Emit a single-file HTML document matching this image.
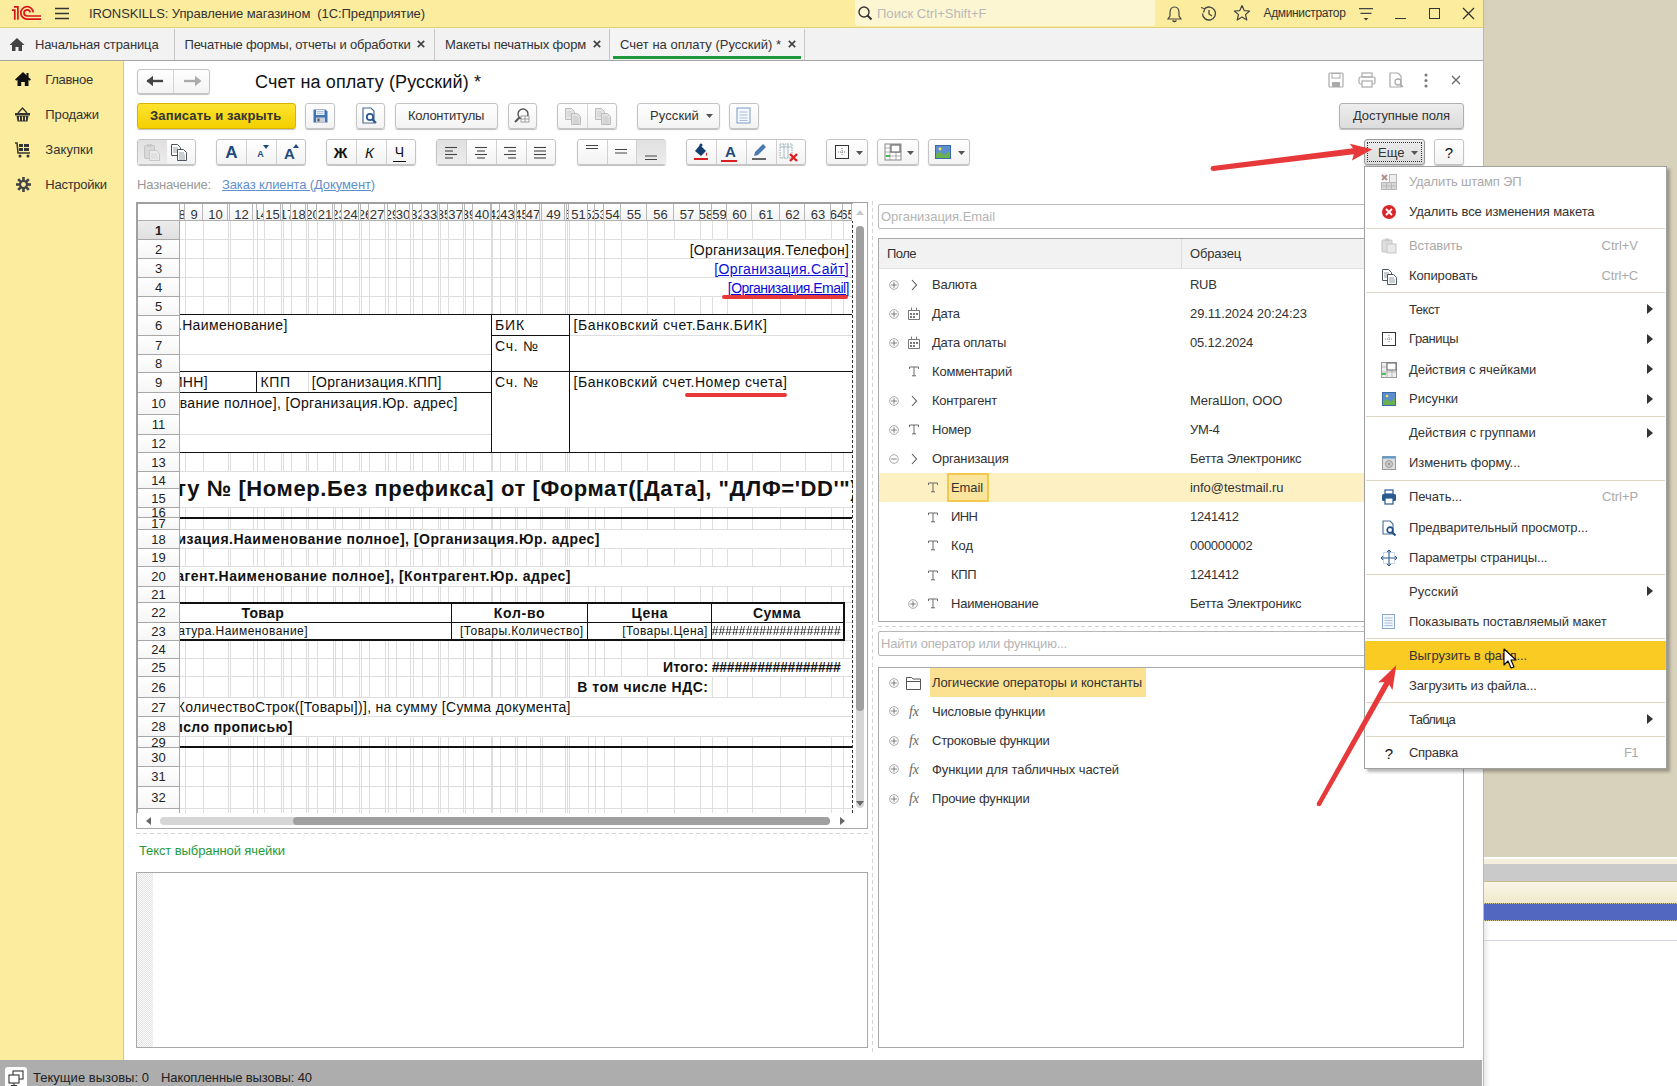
<!DOCTYPE html><html><head><meta charset="utf-8"><style>
html,body{margin:0;padding:0;}
body{width:1677px;height:1086px;position:relative;overflow:hidden;background:#fff;font-family:"Liberation Sans",sans-serif;}
.btn{position:absolute;box-sizing:border-box;border:1px solid #c4c4c4;border-radius:3px;background:linear-gradient(#fff,#f3f3f3);box-shadow:0 1px 1px rgba(0,0,0,0.25);}
.dv{position:absolute;top:0;bottom:0;width:1px;background:#d0d0d0;}
</style></head><body>
<div style="position:absolute;left:0px;top:0px;width:1483px;height:28px;background:#fbec9e;"></div>
<div style="position:absolute;left:0px;top:27px;width:1483px;height:1px;background:#e3cf78;"></div>
<div style="position:absolute;left:1483px;top:0px;width:194px;height:1086px;background:#d8d2bc;"></div>
<svg style="position:absolute;left:0;top:0;" width="48" height="26"><g fill="none" stroke="#d8141c" stroke-width="1.7"><path d="M12 10.1 H14.8 V19.8"/><path d="M14 6.8 H17.9 V19.8"/><path d="M33.2 12.4 A6.2 6.2 0 1 0 27.1 19.1 H41"/><path d="M30.2 12.4 A3.1 3.1 0 1 0 27.1 16 H41"/></g></svg>
<svg style="position:absolute;left:55px;top:7px;" width="14" height="13" viewBox="0 0 14 13"><g stroke="#333" stroke-width="1.3"><path d="M0 1.5H14M0 6.5H14M0 11.5H14"/></g></svg>
<div style="position:absolute;left:89px;top:5.50px;line-height:16px;font-size:13px;color:#333;font-weight:400;white-space:pre;font-family:'Liberation Sans',sans-serif;letter-spacing:-0.084px;">IRONSKILLS: Управление магазином  (1С:Предприятие)</div>
<div style="position:absolute;left:855px;top:0px;width:300px;height:26px;background:#fdf6d2;border-radius:0 0 3px 3px;"></div>
<svg style="position:absolute;left:858px;top:6px;" width="15" height="15" viewBox="0 0 15 15"><circle cx="6" cy="6" r="5" fill="none" stroke="#333" stroke-width="1.4"/><path d="M9.5 9.5 L13.5 13.5" stroke="#333" stroke-width="2"/></svg>
<div style="position:absolute;left:877px;top:5.50px;line-height:16px;font-size:13px;color:#b9b9b9;font-weight:400;white-space:pre;font-family:'Liberation Sans',sans-serif;letter-spacing:0.028px;">Поиск Ctrl+Shift+F</div>
<svg style="position:absolute;left:1166px;top:5px;" width="17" height="18" viewBox="0 0 17 18"><path d="M8.5 2 C5 2 4 5 4 8 V11 L2 14 H15 L13 11 V8 C13 5 12 2 8.5 2Z" fill="none" stroke="#444" stroke-width="1.2"/><path d="M6.5 15.5 Q8.5 17.5 10.5 15.5" fill="none" stroke="#444" stroke-width="1.2"/></svg>
<svg style="position:absolute;left:1199px;top:4px;" width="19" height="19" viewBox="0 0 19 19"><path d="M3.5 9.5 A6.5 6.5 0 1 0 5.5 4.8" fill="none" stroke="#444" stroke-width="1.3"/><path d="M2 3.5 L5.8 4.8 L4.5 8.5" fill="none" stroke="#444" stroke-width="1.2"/><path d="M10 6 V10 L13 12" fill="none" stroke="#444" stroke-width="1.3"/></svg>
<svg style="position:absolute;left:1233px;top:4px;" width="18" height="18" viewBox="0 0 18 18"><path d="M9 1.5 L11.2 6.6 L16.6 7 L12.5 10.6 L13.8 16 L9 13.1 L4.2 16 L5.5 10.6 L1.4 7 L6.8 6.6Z" fill="none" stroke="#444" stroke-width="1.2" stroke-linejoin="round"/></svg>
<div style="position:absolute;left:1263.5px;top:6.00px;line-height:15px;font-size:12px;color:#333;font-weight:400;white-space:pre;font-family:'Liberation Sans',sans-serif;letter-spacing:-0.352px;">Администратор</div>
<svg style="position:absolute;left:1358px;top:5px;" width="16" height="17" viewBox="0 0 16 17"><path d="M1 3.6H15M2.5 8.4H13.5" stroke="#444" stroke-width="1.1"/><path d="M5.5 13 L8 15.5 L10.5 13Z" fill="#444"/></svg>
<div style="position:absolute;left:1395px;top:18px;width:11px;height:1.3px;background:#333;"></div>
<div style="position:absolute;left:1429px;top:8px;width:11px;height:11px;border:1.3px solid #333;box-sizing:border-box;"></div>
<svg style="position:absolute;left:1462px;top:7px;" width="13" height="13" viewBox="0 0 13 13"><path d="M1 1L12 12M12 1L1 12" stroke="#333" stroke-width="1.3"/></svg>
<div style="position:absolute;left:0px;top:28px;width:1483px;height:32px;background:#f2f2f2;"></div>
<div style="position:absolute;left:0px;top:60px;width:1483px;height:1px;background:#a5a5a5;"></div>
<svg style="position:absolute;left:9px;top:37px;" width="16" height="15" viewBox="0 0 16 15"><path d="M8 1 L15.5 8 H13 V14 H9.5 V10 H6.5 V14 H3 V8 H0.5Z" fill="#444"/></svg>
<div style="position:absolute;left:35px;top:36.80px;line-height:16px;font-size:13px;color:#333;font-weight:400;white-space:pre;font-family:'Liberation Sans',sans-serif;letter-spacing:-0.128px;">Начальная страница</div>
<div style="position:absolute;left:174px;top:29px;width:1px;height:31px;background:#c8c8c8;"></div>
<div style="position:absolute;left:184.6px;top:36.80px;line-height:16px;font-size:13px;color:#333;font-weight:400;white-space:pre;font-family:'Liberation Sans',sans-serif;letter-spacing:-0.192px;">Печатные формы, отчеты и обработки</div>
<svg style="position:absolute;left:417px;top:40px;" width="8" height="8" viewBox="0 0 8 8"><path d="M0.8 0.8L7.2 7.2M7.2 0.8L0.8 7.2" stroke="#444" stroke-width="1.7"/></svg>
<div style="position:absolute;left:434px;top:29px;width:1px;height:31px;background:#c8c8c8;"></div>
<div style="position:absolute;left:445px;top:36.80px;line-height:16px;font-size:13px;color:#333;font-weight:400;white-space:pre;font-family:'Liberation Sans',sans-serif;letter-spacing:-0.149px;">Макеты печатных форм</div>
<svg style="position:absolute;left:593px;top:40px;" width="8" height="8" viewBox="0 0 8 8"><path d="M0.8 0.8L7.2 7.2M7.2 0.8L0.8 7.2" stroke="#444" stroke-width="1.7"/></svg>
<div style="position:absolute;left:609px;top:29px;width:1px;height:31px;background:#c8c8c8;"></div>
<div style="position:absolute;left:610px;top:29px;width:194px;height:30px;background:#f4f4f4;"></div>
<div style="position:absolute;left:620px;top:36.80px;line-height:16px;font-size:13px;color:#333;font-weight:400;white-space:pre;font-family:'Liberation Sans',sans-serif;letter-spacing:0.001px;">Счет на оплату (Русский) *</div>
<svg style="position:absolute;left:788px;top:40px;" width="8" height="8" viewBox="0 0 8 8"><path d="M0.8 0.8L7.2 7.2M7.2 0.8L0.8 7.2" stroke="#444" stroke-width="1.7"/></svg>
<div style="position:absolute;left:613px;top:56px;width:188px;height:2.5px;background:#1e9a3c;"></div>
<div style="position:absolute;left:804px;top:29px;width:1px;height:31px;background:#c8c8c8;"></div>
<div style="position:absolute;left:0px;top:61px;width:123px;height:999px;background:#fbec9e;"></div>
<div style="position:absolute;left:123px;top:61px;width:1px;height:999px;background:#d9c67a;"></div>
<svg style="position:absolute;left:14px;top:71px;" width="18" height="16" viewBox="0 0 18 16"><path d="M9 1 L17 8.5 L15.6 9.8 L14.5 8.8 V15 H10.8 V11 H7.2 V15 H3.5 V8.8 L2.4 9.8 L1 8.5Z" fill="#111"/><rect x="12.5" y="2" width="2" height="4" fill="#111"/></svg>
<div style="position:absolute;left:45.3px;top:71.50px;line-height:16px;font-size:13px;color:#333;font-weight:400;white-space:pre;font-family:'Liberation Sans',sans-serif;letter-spacing:-0.310px;">Главное</div>
<svg style="position:absolute;left:14px;top:107px;" width="17" height="15" viewBox="0 0 17 15"><path d="M4 6 L8.5 1 L13 6" fill="none" stroke="#333" stroke-width="1.3"/><rect x="1" y="6" width="15" height="2.5" fill="#333"/><path d="M2.5 9 H14.5 L13.5 14.5 H3.5Z" fill="#333"/><path d="M5.5 9.5V13.5M8.5 9.5V13.5M11.5 9.5V13.5" stroke="#fbec9e" stroke-width="1"/></svg>
<div style="position:absolute;left:45.3px;top:106.50px;line-height:16px;font-size:13px;color:#333;font-weight:400;white-space:pre;font-family:'Liberation Sans',sans-serif;letter-spacing:-0.114px;">Продажи</div>
<svg style="position:absolute;left:14px;top:142px;" width="18" height="16" viewBox="0 0 18 16"><path d="M1 1 H3 L4 11 H16" fill="none" stroke="#333" stroke-width="1.5"/><rect x="5" y="2" width="4" height="3" fill="#333"/><rect x="10" y="2" width="5" height="3" fill="#333"/><rect x="5" y="6" width="4" height="3" fill="#333"/><rect x="10" y="6" width="5" height="3" fill="#333"/><circle cx="6" cy="14" r="1.5" fill="#333"/><circle cx="14" cy="14" r="1.5" fill="#333"/></svg>
<div style="position:absolute;left:45.3px;top:141.50px;line-height:16px;font-size:13px;color:#333;font-weight:400;white-space:pre;font-family:'Liberation Sans',sans-serif;letter-spacing:0.056px;">Закупки</div>
<svg style="position:absolute;left:16px;top:177px;" width="15" height="15" viewBox="0 0 15 15"><g fill="#444"><circle cx="7.5" cy="7.5" r="4.6"/><rect x="6.2" y="0" width="2.6" height="15"/><rect x="0" y="6.2" width="15" height="2.6"/><rect x="6.2" y="0" width="2.6" height="15" transform="rotate(45 7.5 7.5)"/><rect x="6.2" y="0" width="2.6" height="15" transform="rotate(-45 7.5 7.5)"/></g><circle cx="7.5" cy="7.5" r="2.4" fill="#fbec9e"/></svg>
<div style="position:absolute;left:45.3px;top:176.50px;line-height:16px;font-size:13px;color:#333;font-weight:400;white-space:pre;font-family:'Liberation Sans',sans-serif;letter-spacing:-0.250px;">Настройки</div>
<div class="btn" style="left:137px;top:69px;width:73px;height:25px;"></div>
<div style="position:absolute;left:173px;top:70px;width:1px;height:23px;background:#d4d4d4;"></div>
<svg style="position:absolute;left:146px;top:75px;" width="20" height="12" viewBox="0 0 20 12"><path d="M1 6 H17" stroke="#444" stroke-width="2.4"/><path d="M0.5 6 L7 0.8 L7 11.2Z" fill="#444"/></svg>
<svg style="position:absolute;left:182px;top:75px;" width="20" height="12" viewBox="0 0 20 12"><path d="M2 6 H18" stroke="#aaa" stroke-width="2.4"/><path d="M19.5 6 L13 0.8 L13 11.2Z" fill="#aaa"/></svg>
<div style="position:absolute;left:255px;top:70.50px;line-height:22px;font-size:18px;color:#111;font-weight:400;white-space:pre;font-family:'Liberation Sans',sans-serif;letter-spacing:0.120px;">Счет на оплату (Русский) *</div>
<svg style="position:absolute;left:1328px;top:72px;" width="16" height="16" viewBox="0 0 16 16"><rect x="1" y="1" width="14" height="14" rx="1" fill="none" stroke="#aaa" stroke-width="1.2"/><rect x="4" y="1.5" width="8" height="4.5" fill="none" stroke="#aaa"/><rect x="4" y="10" width="8" height="5" fill="#aaa"/></svg>
<svg style="position:absolute;left:1358px;top:72px;" width="18" height="16" viewBox="0 0 18 16"><rect x="4" y="1" width="10" height="4" fill="none" stroke="#aaa" stroke-width="1.2"/><rect x="1" y="5" width="16" height="7" rx="1.5" fill="none" stroke="#aaa" stroke-width="1.2"/><rect x="4" y="9" width="10" height="6" fill="#fff" stroke="#aaa" stroke-width="1.2"/></svg>
<svg style="position:absolute;left:1389px;top:72px;" width="17" height="17" viewBox="0 0 17 17"><path d="M1 1 H9 L12 4 V15 H1Z" fill="none" stroke="#aaa" stroke-width="1.2"/><circle cx="9" cy="10" r="3" fill="none" stroke="#aaa" stroke-width="1.3"/><path d="M11 12 L14 15" stroke="#aaa" stroke-width="1.6"/></svg>
<svg style="position:absolute;left:1423px;top:73px;" width="6" height="15" viewBox="0 0 6 15"><circle cx="3" cy="2" r="1.5" fill="#777"/><circle cx="3" cy="7.5" r="1.5" fill="#777"/><circle cx="3" cy="13" r="1.5" fill="#777"/></svg>
<svg style="position:absolute;left:1451px;top:75px;" width="10" height="10" viewBox="0 0 10 10"><path d="M1 1L9 9M9 1L1 9" stroke="#666" stroke-width="1.3"/></svg>
<div class="btn" style="left:137px;top:103px;width:159px;height:26px;background:linear-gradient(#fde431,#f4cf00);border-color:#d7b400;"></div>
<div style="position:absolute;left:150px;top:108.00px;line-height:16px;font-size:13px;color:#333;font-weight:700;white-space:pre;font-family:'Liberation Sans',sans-serif;letter-spacing:0.148px;">Записать и закрыть</div>
<div class="btn" style="left:305px;top:103px;width:30px;height:26px;"></div>
<svg style="position:absolute;left:313px;top:109px;" width="15" height="14" viewBox="0 0 15 14"><path d="M0.5 0.5H12.5L14.5 2.5V13.5H0.5Z" fill="#3f73b5"/><rect x="3" y="1" width="8.5" height="5" fill="#e9f0f8"/><path d="M4 2.5H10.5M4 4.3H10.5" stroke="#9fb8d8" stroke-width="0.8"/><rect x="3" y="8.5" width="9" height="5" fill="#c9cfd6"/><rect x="4.5" y="9.5" width="2" height="3" fill="#555"/></svg>
<div class="btn" style="left:356px;top:103px;width:29px;height:26px;"></div>
<svg style="position:absolute;left:361px;top:107px;" width="19" height="18" viewBox="0 0 19 18"><path d="M2 1 H10 L13 4 V16 H2Z" fill="#fff" stroke="#4a6c94" stroke-width="1.2"/><circle cx="9" cy="10" r="3.2" fill="none" stroke="#2a5a90" stroke-width="1.8"/><path d="M11.5 12.5 L15 16" stroke="#2a5a90" stroke-width="2.2"/></svg>
<div class="btn" style="left:395px;top:103px;width:103px;height:26px;"></div>
<div style="position:absolute;left:408px;top:108.00px;line-height:16px;font-size:13px;color:#333;font-weight:400;white-space:pre;font-family:'Liberation Sans',sans-serif;letter-spacing:-0.284px;">Колонтитулы</div>
<div class="btn" style="left:508px;top:103px;width:29px;height:26px;"></div>
<svg style="position:absolute;left:513px;top:107px;" width="19" height="18" viewBox="0 0 19 18"><circle cx="10" cy="7" r="5" fill="none" stroke="#555" stroke-width="1.4"/><path d="M6.5 10.5 L2 15" stroke="#555" stroke-width="2"/><rect x="8" y="9" width="8" height="6" fill="#fff" stroke="#888" stroke-width="0.8"/><path d="M8 12H16M12 9V15" stroke="#888" stroke-width="0.8"/></svg>
<div class="btn" style="left:557px;top:103px;width:60px;height:26px;"></div>
<div style="position:absolute;left:587px;top:104px;width:1px;height:24px;background:#d4d4d4;"></div>
<svg style="position:absolute;left:564px;top:107px;" width="19" height="19" viewBox="0 0 19 19"><path d="M1.5 1.5H7.5L10.5 4.5V12.5H1.5Z" fill="#e6e6e6" stroke="#bdbdbd" stroke-width="1"/><path d="M3 5H8M3 7H9M3 9H9" stroke="#c8c8c8" stroke-width="0.8"/><path d="M7.5 6.5H13.5L16.5 9.5V17.5H7.5Z" fill="#e0e0e0" stroke="#bdbdbd" stroke-width="1"/><path d="M9 10H14M9 12H15M9 14H15M9 16H15" stroke="#c4c4c4" stroke-width="0.8"/></svg>
<svg style="position:absolute;left:594px;top:107px;" width="19" height="19" viewBox="0 0 19 19"><path d="M1.5 1.5H7.5L10.5 4.5V12.5H1.5Z" fill="#e6e6e6" stroke="#bdbdbd" stroke-width="1"/><path d="M3 5H8M3 7H9M3 9H9" stroke="#c8c8c8" stroke-width="0.8"/><path d="M7.5 6.5H13.5L16.5 9.5V17.5H7.5Z" fill="#e0e0e0" stroke="#bdbdbd" stroke-width="1"/><path d="M9 10H14M9 12H15M9 14H15M9 16H15" stroke="#c4c4c4" stroke-width="0.8"/></svg>
<div class="btn" style="left:637px;top:103px;width:83px;height:26px;"></div>
<div style="position:absolute;left:650px;top:108.00px;line-height:16px;font-size:13px;color:#333;font-weight:400;white-space:pre;font-family:'Liberation Sans',sans-serif;letter-spacing:0.107px;">Русский</div>
<svg style="position:absolute;left:706px;top:114px;" width="7" height="4" viewBox="0 0 7 4"><path d="M0 0H7L3.5 4Z" fill="#555"/></svg>
<div class="btn" style="left:729px;top:103px;width:30px;height:26px;"></div>
<svg style="position:absolute;left:736px;top:107px;" width="15" height="17" viewBox="0 0 15 17"><rect x="1" y="1" width="13" height="15" fill="#f4f7fb" stroke="#7d9cc6"/><path d="M3.5 5H11.5M3.5 8H11.5M3.5 11H11.5M3.5 13.5H11.5" stroke="#a9bfdc" stroke-width="1"/></svg>
<div class="btn" style="left:1339px;top:103px;width:125px;height:26px;background:linear-gradient(#ededed,#dcdcdc);border-color:#b0b0b0;"></div>
<div style="position:absolute;left:1353px;top:108.00px;line-height:16px;font-size:13px;color:#333;font-weight:400;white-space:pre;font-family:'Liberation Sans',sans-serif;letter-spacing:-0.093px;">Доступные поля</div>
<div class="btn" style="left:137px;top:139px;width:59px;height:26px;"></div>
<div style="position:absolute;left:166px;top:140px;width:1px;height:24px;background:#d0d0d0;"></div>
<div style="position:absolute;left:138px;top:140px;width:29px;height:24px;background:linear-gradient(#e0e0e0,#ececec);"></div>
<svg style="position:absolute;left:143px;top:143px;" width="18" height="19" viewBox="0 0 18 19"><rect x="1.5" y="2.5" width="10" height="13" rx="1" fill="#d9d9d9" stroke="#c4c4c4"/><rect x="4" y="1" width="5" height="3" rx="1" fill="#c8c8c8"/><path d="M6.5 7.5H13.5L16.5 10.5V17.5H6.5Z" fill="#ebebeb" stroke="#c8c8c8"/><path d="M8 11H14M8 13H15M8 15H15" stroke="#d0d0d0" stroke-width="0.8"/></svg>
<svg style="position:absolute;left:170px;top:143px;" width="19" height="19" viewBox="0 0 19 19"><path d="M1.5 1.5H7.5L10.5 4.5V12.5H1.5Z" fill="#fff" stroke="#4a5560" stroke-width="1"/><path d="M3 5H8M3 7H9M3 9H9" stroke="#7a8590" stroke-width="0.8"/><path d="M7.5 6.5H13.5L16.5 9.5V17.5H7.5Z" fill="#fff" stroke="#4a5560" stroke-width="1"/><path d="M9 10H14M9 12H15M9 14H15M9 16H15" stroke="#7a8590" stroke-width="0.8"/></svg>
<div class="btn" style="left:216px;top:139px;width:90px;height:26px;"></div>
<div style="position:absolute;left:246px;top:140px;width:1px;height:24px;background:#d0d0d0;"></div>
<div style="position:absolute;left:276px;top:140px;width:1px;height:24px;background:#d0d0d0;"></div>
<div style="position:absolute;left:-368.5px;width:1200px;text-align:center;top:142.00px;line-height:21px;font-size:17px;color:#1d4a7a;font-weight:700;white-space:pre;font-family:'Liberation Sans',sans-serif;">A</div>
<div style="position:absolute;left:-339.5px;width:1200px;text-align:center;top:148.50px;line-height:11px;font-size:9px;color:#1d4a7a;font-weight:700;white-space:pre;font-family:'Liberation Sans',sans-serif;">A</div>
<svg style="position:absolute;left:263px;top:145px;" width="6" height="4" viewBox="0 0 6 4"><path d="M0 0H6L3 4Z" fill="#1d4a7a"/></svg>
<div style="position:absolute;left:-310.5px;width:1200px;text-align:center;top:143.50px;line-height:19px;font-size:15px;color:#1d4a7a;font-weight:700;white-space:pre;font-family:'Liberation Sans',sans-serif;">A</div>
<svg style="position:absolute;left:293px;top:144px;" width="6" height="4" viewBox="0 0 6 4"><path d="M0 4H6L3 0Z" fill="#1d4a7a"/></svg>
<div class="btn" style="left:326px;top:139px;width:90px;height:26px;"></div>
<div style="position:absolute;left:356px;top:140px;width:1px;height:24px;background:#d0d0d0;"></div>
<div style="position:absolute;left:386px;top:140px;width:1px;height:24px;background:#d0d0d0;"></div>
<div style="position:absolute;left:-259.5px;width:1200px;text-align:center;top:143.00px;line-height:19px;font-size:15px;color:#111;font-weight:700;white-space:pre;font-family:'Liberation Sans',sans-serif;">Ж</div>
<div style="position:absolute;left:-230.5px;width:1200px;text-align:center;top:143.00px;line-height:19px;font-size:15px;color:#111;font-weight:400;white-space:pre;font-family:'Liberation Sans',sans-serif;font-style:italic;">К</div>
<div style="position:absolute;left:-200.5px;width:1200px;text-align:center;top:142.50px;line-height:18px;font-size:14px;color:#111;font-weight:400;white-space:pre;font-family:'Liberation Sans',sans-serif;">Ч</div>
<div style="position:absolute;left:393px;top:161px;width:13px;height:1px;background:#111;"></div>
<div class="btn" style="left:436px;top:139px;width:120px;height:26px;"></div>
<div style="position:absolute;left:466px;top:140px;width:1px;height:24px;background:#d0d0d0;"></div>
<div style="position:absolute;left:496px;top:140px;width:1px;height:24px;background:#d0d0d0;"></div>
<div style="position:absolute;left:526px;top:140px;width:1px;height:24px;background:#d0d0d0;"></div>
<div style="position:absolute;left:437px;top:140px;width:29px;height:24px;background:linear-gradient(#e0e0e0,#ececec);"></div>
<svg style="position:absolute;left:445px;top:146px;" width="12" height="14" viewBox="0 0 12 14"><path d="M0 1.5H12" stroke="#444" stroke-width="1.1"/><path d="M0 5.0H8" stroke="#444" stroke-width="1.1"/><path d="M0 8.5H12" stroke="#444" stroke-width="1.1"/><path d="M0 12.0H8" stroke="#444" stroke-width="1.1"/></svg>
<svg style="position:absolute;left:475px;top:146px;" width="12" height="14" viewBox="0 0 12 14"><path d="M0 1.5H12" stroke="#444" stroke-width="1.1"/><path d="M2 5.0H10" stroke="#444" stroke-width="1.1"/><path d="M0 8.5H12" stroke="#444" stroke-width="1.1"/><path d="M2 12.0H10" stroke="#444" stroke-width="1.1"/></svg>
<svg style="position:absolute;left:504px;top:146px;" width="12" height="14" viewBox="0 0 12 14"><path d="M0 1.5H12" stroke="#444" stroke-width="1.1"/><path d="M4 5.0H12" stroke="#444" stroke-width="1.1"/><path d="M0 8.5H12" stroke="#444" stroke-width="1.1"/><path d="M4 12.0H12" stroke="#444" stroke-width="1.1"/></svg>
<svg style="position:absolute;left:534px;top:146px;" width="12" height="14" viewBox="0 0 12 14"><path d="M0 1.5H12" stroke="#444" stroke-width="1.1"/><path d="M0 5.0H12" stroke="#444" stroke-width="1.1"/><path d="M0 8.5H12" stroke="#444" stroke-width="1.1"/><path d="M0 12.0H12" stroke="#444" stroke-width="1.1"/></svg>
<div class="btn" style="left:577px;top:139px;width:89px;height:26px;"></div>
<div style="position:absolute;left:607px;top:140px;width:1px;height:24px;background:#d0d0d0;"></div>
<div style="position:absolute;left:636px;top:140px;width:1px;height:24px;background:#d0d0d0;"></div>
<div style="position:absolute;left:637px;top:140px;width:29px;height:24px;background:linear-gradient(#e0e0e0,#ececec);"></div>
<svg style="position:absolute;left:585px;top:144px;" width="14" height="14" viewBox="0 0 14 14"><path d="M1 1.5H13M1 4.5H13" stroke="#444" stroke-width="1.1"/></svg>
<svg style="position:absolute;left:614px;top:147px;" width="14" height="10" viewBox="0 0 14 10"><path d="M1 2.5H13M1 6H13" stroke="#444" stroke-width="1.1"/></svg>
<svg style="position:absolute;left:644px;top:151px;" width="14" height="10" viewBox="0 0 14 10"><path d="M1 5H13M1 8.5H13" stroke="#444" stroke-width="1.1"/></svg>
<div class="btn" style="left:686px;top:139px;width:120px;height:26px;"></div>
<div style="position:absolute;left:716px;top:140px;width:1px;height:24px;background:#d0d0d0;"></div>
<div style="position:absolute;left:746px;top:140px;width:1px;height:24px;background:#d0d0d0;"></div>
<div style="position:absolute;left:776px;top:140px;width:1px;height:24px;background:#d0d0d0;"></div>
<svg style="position:absolute;left:692px;top:143px;" width="18" height="18" viewBox="0 0 18 18"><path d="M8 2 L14 8 L9 13 L3 8Z" fill="#133e6e"/><circle cx="9" cy="2" r="1.5" fill="#133e6e"/><path d="M14 9 Q16 12 14 13" fill="#c00"/><rect x="2" y="15" width="14" height="2" fill="#d81e1e"/></svg>
<div style="position:absolute;left:130.5px;width:1200px;text-align:center;top:142.00px;line-height:19px;font-size:15px;color:#1d4a7a;font-weight:700;white-space:pre;font-family:'Liberation Sans',sans-serif;">A</div>
<div style="position:absolute;left:721px;top:160px;width:16px;height:2px;background:#d81e1e;"></div>
<svg style="position:absolute;left:750px;top:143px;" width="18" height="18" viewBox="0 0 18 18"><path d="M13 1 L16 4 L8 12 L4 13 L5 9Z" fill="#4a7ab0"/><rect x="2" y="15" width="14" height="2" fill="#666"/></svg>
<svg style="position:absolute;left:779px;top:143px;" width="20" height="20" viewBox="0 0 20 20"><rect x="1" y="1" width="12" height="14" fill="none" stroke="#8aa" stroke-width="1" stroke-dasharray="1.5,1"/><path d="M1 4H13M5 1V15M9 1V15" stroke="#9ab" stroke-width="0.8"/><path d="M11 11L18 18M18 11L11 18" stroke="#e02020" stroke-width="2.4"/></svg>
<div class="btn" style="left:826px;top:139px;width:42px;height:26px;"></div>
<svg style="position:absolute;left:835px;top:145px;" width="14" height="14" viewBox="0 0 14 14"><rect x="0.5" y="0.5" width="13" height="13" fill="#fff" stroke="#333"/><path d="M7 3V11M3 7H11" stroke="#777" stroke-width="1" stroke-dasharray="1,1"/></svg>
<svg style="position:absolute;left:856px;top:151px;" width="7" height="4" viewBox="0 0 7 4"><path d="M0 0H7L3.5 4Z" fill="#555"/></svg>
<div class="btn" style="left:877px;top:139px;width:42px;height:26px;"></div>
<svg style="position:absolute;left:884px;top:143px;" width="18" height="18" viewBox="0 0 18 18"><rect x="1" y="1" width="16" height="16" fill="#fff" stroke="#888"/><path d="M1 5H17M1 9H17M1 13H17M6 1V17M12 1V17" stroke="#999" stroke-width="0.8"/><rect x="7" y="2" width="9" height="7" fill="#fff" stroke="#555"/><path d="M2 13H6" stroke="#2a2" stroke-width="1.5"/></svg>
<svg style="position:absolute;left:907px;top:151px;" width="7" height="4" viewBox="0 0 7 4"><path d="M0 0H7L3.5 4Z" fill="#555"/></svg>
<div class="btn" style="left:928px;top:139px;width:42px;height:26px;"></div>
<svg style="position:absolute;left:935px;top:145px;" width="16" height="14" viewBox="0 0 16 14"><rect x="0.5" y="0.5" width="15" height="13" fill="#5d8fcf" stroke="#3b6aa8"/><path d="M1 13 L1 9 L5 7 L9 10 L15 6 V13Z" fill="#6ab04c"/><circle cx="5" cy="4" r="1.4" fill="#ffe14a"/></svg>
<svg style="position:absolute;left:958px;top:151px;" width="7" height="4" viewBox="0 0 7 4"><path d="M0 0H7L3.5 4Z" fill="#555"/></svg>
<div class="btn" style="left:1364px;top:139px;width:61px;height:26px;background:linear-gradient(#ececec,#dcdcdc);border-color:#9a9a9a;"></div>
<div style="position:absolute;left:1367px;top:142px;width:55px;height:20px;border:1px dotted #333;box-sizing:border-box;"></div>
<div style="position:absolute;left:1378px;top:144.50px;line-height:16px;font-size:13px;color:#333;font-weight:400;white-space:pre;font-family:'Liberation Sans',sans-serif;">Еще</div>
<svg style="position:absolute;left:1411px;top:151px;" width="7" height="4" viewBox="0 0 7 4"><path d="M0 0H7L3.5 4Z" fill="#555"/></svg>
<div class="btn" style="left:1434px;top:139px;width:30px;height:26px;"></div>
<div style="position:absolute;left:849px;width:1200px;text-align:center;top:143.00px;line-height:19px;font-size:15px;color:#111;font-weight:400;white-space:pre;font-family:'Liberation Sans',sans-serif;">?</div>
<div style="position:absolute;left:137px;top:176.50px;line-height:16px;font-size:13px;color:#999;font-weight:400;white-space:pre;font-family:'Liberation Sans',sans-serif;letter-spacing:-0.168px;">Назначение:</div>
<div style="position:absolute;left:222px;top:176.50px;line-height:16px;font-size:13px;color:#5f8fcb;font-weight:400;white-space:pre;font-family:'Liberation Sans',sans-serif;letter-spacing:-0.116px;text-decoration:underline;">Заказ клиента (Документ)</div>
<div style="position:absolute;left:136px;top:202px;width:732px;height:627px;border:1px solid #a8a8a8;border-top:2px solid #a0a0a0;border-left:2px solid #a0a0a0;box-sizing:border-box;background:#fff;"></div>
<div style="position:absolute;left:180px;top:221px;width:673px;height:592px;overflow:hidden;">
<div style="position:absolute;left:5px;top:-1px;width:1px;height:593px;background:#dedede;"></div>
<div style="position:absolute;left:23px;top:-1px;width:1px;height:593px;background:#dedede;"></div>
<div style="position:absolute;left:48px;top:-1px;width:1px;height:593px;background:#dedede;"></div>
<div style="position:absolute;left:50px;top:-1px;width:1px;height:593px;background:#dedede;"></div>
<div style="position:absolute;left:73px;top:-1px;width:1px;height:593px;background:#dedede;"></div>
<div style="position:absolute;left:77px;top:-1px;width:1px;height:593px;background:#dedede;"></div>
<div style="position:absolute;left:84px;top:-1px;width:1px;height:593px;background:#dedede;"></div>
<div style="position:absolute;left:101px;top:-1px;width:1px;height:593px;background:#dedede;"></div>
<div style="position:absolute;left:103px;top:-1px;width:1px;height:593px;background:#dedede;"></div>
<div style="position:absolute;left:111px;top:-1px;width:1px;height:593px;background:#dedede;"></div>
<div style="position:absolute;left:126px;top:-1px;width:1px;height:593px;background:#dedede;"></div>
<div style="position:absolute;left:128px;top:-1px;width:1px;height:593px;background:#dedede;"></div>
<div style="position:absolute;left:137px;top:-1px;width:1px;height:593px;background:#dedede;"></div>
<div style="position:absolute;left:153px;top:-1px;width:1px;height:593px;background:#dedede;"></div>
<div style="position:absolute;left:155px;top:-1px;width:1px;height:593px;background:#dedede;"></div>
<div style="position:absolute;left:162px;top:-1px;width:1px;height:593px;background:#dedede;"></div>
<div style="position:absolute;left:179px;top:-1px;width:1px;height:593px;background:#dedede;"></div>
<div style="position:absolute;left:181px;top:-1px;width:1px;height:593px;background:#dedede;"></div>
<div style="position:absolute;left:189px;top:-1px;width:1px;height:593px;background:#dedede;"></div>
<div style="position:absolute;left:205px;top:-1px;width:1px;height:593px;background:#dedede;"></div>
<div style="position:absolute;left:208px;top:-1px;width:1px;height:593px;background:#dedede;"></div>
<div style="position:absolute;left:216px;top:-1px;width:1px;height:593px;background:#dedede;"></div>
<div style="position:absolute;left:230px;top:-1px;width:1px;height:593px;background:#dedede;"></div>
<div style="position:absolute;left:233px;top:-1px;width:1px;height:593px;background:#dedede;"></div>
<div style="position:absolute;left:242px;top:-1px;width:1px;height:593px;background:#dedede;"></div>
<div style="position:absolute;left:258px;top:-1px;width:1px;height:593px;background:#dedede;"></div>
<div style="position:absolute;left:260px;top:-1px;width:1px;height:593px;background:#dedede;"></div>
<div style="position:absolute;left:268px;top:-1px;width:1px;height:593px;background:#dedede;"></div>
<div style="position:absolute;left:283px;top:-1px;width:1px;height:593px;background:#dedede;"></div>
<div style="position:absolute;left:285px;top:-1px;width:1px;height:593px;background:#dedede;"></div>
<div style="position:absolute;left:293px;top:-1px;width:1px;height:593px;background:#dedede;"></div>
<div style="position:absolute;left:311px;top:-1px;width:1px;height:593px;background:#dedede;"></div>
<div style="position:absolute;left:312px;top:-1px;width:1px;height:593px;background:#dedede;"></div>
<div style="position:absolute;left:320px;top:-1px;width:1px;height:593px;background:#dedede;"></div>
<div style="position:absolute;left:335px;top:-1px;width:1px;height:593px;background:#dedede;"></div>
<div style="position:absolute;left:337px;top:-1px;width:1px;height:593px;background:#dedede;"></div>
<div style="position:absolute;left:346px;top:-1px;width:1px;height:593px;background:#dedede;"></div>
<div style="position:absolute;left:360px;top:-1px;width:1px;height:593px;background:#dedede;"></div>
<div style="position:absolute;left:362px;top:-1px;width:1px;height:593px;background:#dedede;"></div>
<div style="position:absolute;left:385px;top:-1px;width:1px;height:593px;background:#dedede;"></div>
<div style="position:absolute;left:387px;top:-1px;width:1px;height:593px;background:#dedede;"></div>
<div style="position:absolute;left:389px;top:-1px;width:1px;height:593px;background:#dedede;"></div>
<div style="position:absolute;left:408px;top:-1px;width:1px;height:593px;background:#dedede;"></div>
<div style="position:absolute;left:415px;top:-1px;width:1px;height:593px;background:#dedede;"></div>
<div style="position:absolute;left:424px;top:-1px;width:1px;height:593px;background:#dedede;"></div>
<div style="position:absolute;left:441px;top:-1px;width:1px;height:593px;background:#dedede;"></div>
<div style="position:absolute;left:467px;top:-1px;width:1px;height:593px;background:#dedede;"></div>
<div style="position:absolute;left:494px;top:-1px;width:1px;height:593px;background:#dedede;"></div>
<div style="position:absolute;left:520px;top:-1px;width:1px;height:593px;background:#dedede;"></div>
<div style="position:absolute;left:532px;top:-1px;width:1px;height:593px;background:#dedede;"></div>
<div style="position:absolute;left:547px;top:-1px;width:1px;height:593px;background:#dedede;"></div>
<div style="position:absolute;left:572px;top:-1px;width:1px;height:593px;background:#dedede;"></div>
<div style="position:absolute;left:600px;top:-1px;width:1px;height:593px;background:#dedede;"></div>
<div style="position:absolute;left:625px;top:-1px;width:1px;height:593px;background:#dedede;"></div>
<div style="position:absolute;left:651px;top:-1px;width:1px;height:593px;background:#dedede;"></div>
<div style="position:absolute;left:663px;top:-1px;width:1px;height:593px;background:#dedede;"></div>
<div style="position:absolute;left:-1px;top:18px;width:673px;height:1px;background:#dedede;"></div>
<div style="position:absolute;left:-1px;top:37px;width:673px;height:1px;background:#dedede;"></div>
<div style="position:absolute;left:-1px;top:56px;width:673px;height:1px;background:#dedede;"></div>
<div style="position:absolute;left:-1px;top:75px;width:673px;height:1px;background:#dedede;"></div>
<div style="position:absolute;left:-1px;top:94px;width:673px;height:1px;background:#dedede;"></div>
<div style="position:absolute;left:-1px;top:114px;width:673px;height:1px;background:#dedede;"></div>
<div style="position:absolute;left:-1px;top:133px;width:673px;height:1px;background:#dedede;"></div>
<div style="position:absolute;left:-1px;top:151px;width:673px;height:1px;background:#dedede;"></div>
<div style="position:absolute;left:-1px;top:171px;width:673px;height:1px;background:#dedede;"></div>
<div style="position:absolute;left:-1px;top:193px;width:673px;height:1px;background:#dedede;"></div>
<div style="position:absolute;left:-1px;top:213px;width:673px;height:1px;background:#dedede;"></div>
<div style="position:absolute;left:-1px;top:231px;width:673px;height:1px;background:#dedede;"></div>
<div style="position:absolute;left:-1px;top:250px;width:673px;height:1px;background:#dedede;"></div>
<div style="position:absolute;left:-1px;top:267px;width:673px;height:1px;background:#dedede;"></div>
<div style="position:absolute;left:-1px;top:286px;width:673px;height:1px;background:#dedede;"></div>
<div style="position:absolute;left:-1px;top:296px;width:673px;height:1px;background:#dedede;"></div>
<div style="position:absolute;left:-1px;top:308px;width:673px;height:1px;background:#dedede;"></div>
<div style="position:absolute;left:-1px;top:327px;width:673px;height:1px;background:#dedede;"></div>
<div style="position:absolute;left:-1px;top:345px;width:673px;height:1px;background:#dedede;"></div>
<div style="position:absolute;left:-1px;top:365px;width:673px;height:1px;background:#dedede;"></div>
<div style="position:absolute;left:-1px;top:381px;width:673px;height:1px;background:#dedede;"></div>
<div style="position:absolute;left:-1px;top:401px;width:673px;height:1px;background:#dedede;"></div>
<div style="position:absolute;left:-1px;top:419px;width:673px;height:1px;background:#dedede;"></div>
<div style="position:absolute;left:-1px;top:437px;width:673px;height:1px;background:#dedede;"></div>
<div style="position:absolute;left:-1px;top:455px;width:673px;height:1px;background:#dedede;"></div>
<div style="position:absolute;left:-1px;top:476px;width:673px;height:1px;background:#dedede;"></div>
<div style="position:absolute;left:-1px;top:495px;width:673px;height:1px;background:#dedede;"></div>
<div style="position:absolute;left:-1px;top:515px;width:673px;height:1px;background:#dedede;"></div>
<div style="position:absolute;left:-1px;top:526px;width:673px;height:1px;background:#dedede;"></div>
<div style="position:absolute;left:-1px;top:545px;width:673px;height:1px;background:#dedede;"></div>
<div style="position:absolute;left:-1px;top:565px;width:673px;height:1px;background:#dedede;"></div>
<div style="position:absolute;left:-1px;top:587px;width:673px;height:1px;background:#dedede;"></div>
<div style="position:absolute;left:-1px;top:605px;width:673px;height:1px;background:#dedede;"></div>
<div style="position:absolute;left:494px;top:19px;width:178px;height:18px;background:#fff;"></div>
<div style="position:absolute;left:494px;top:38px;width:178px;height:18px;background:#fff;"></div>
<div style="position:absolute;left:494px;top:57px;width:178px;height:18px;background:#fff;"></div>
<div style="position:absolute;left:0px;top:94px;width:672px;height:137px;background:#fff;"></div>
<div style="position:absolute;left:0px;top:133px;width:311px;height:1px;background:#dedede;"></div>
<div style="position:absolute;left:389px;top:114px;width:283px;height:1px;background:#dedede;"></div>
<div style="position:absolute;left:0px;top:213px;width:311px;height:1px;background:#dedede;"></div>
<div style="position:absolute;left:128px;top:151px;width:1px;height:20px;background:#dedede;"></div>
<div style="position:absolute;left:0px;top:251px;width:672px;height:35px;background:#fff;"></div>
<div style="position:absolute;left:0px;top:309px;width:672px;height:18px;background:#fff;"></div>
<div style="position:absolute;left:0px;top:346px;width:672px;height:19px;background:#fff;"></div>
<div style="position:absolute;left:0px;top:477px;width:672px;height:18px;background:#fff;"></div>
<div style="position:absolute;left:0px;top:496px;width:672px;height:19px;background:#fff;"></div>
<div style="position:absolute;left:0px;top:382px;width:664px;height:37px;background:#fff;"></div>
<div style="position:absolute;left:480px;top:438px;width:192px;height:17px;background:#fff;"></div>
<div style="position:absolute;left:395px;top:456px;width:136px;height:20px;background:#fff;"></div>
<div style="position:absolute;left:672px;top:-1px;width:1px;height:593px;background:repeating-linear-gradient(#333 0 3px,transparent 3px 5px);"></div>
<div style="position:absolute;left:0px;top:93px;width:672px;height:1px;background:#111;"></div>
<div style="position:absolute;left:311px;top:93px;width:1px;height:139px;background:#111;"></div>
<div style="position:absolute;left:389px;top:93px;width:1px;height:139px;background:#111;"></div>
<div style="position:absolute;left:311px;top:114px;width:78px;height:1px;background:#111;"></div>
<div style="position:absolute;left:0px;top:150px;width:672px;height:1px;background:#111;"></div>
<div style="position:absolute;left:0px;top:171px;width:311px;height:1px;background:#111;"></div>
<div style="position:absolute;left:76px;top:151px;width:1px;height:20px;background:#111;"></div>
<div style="position:absolute;left:0px;top:231px;width:672px;height:1px;background:#111;"></div>
<div style="position:absolute;left:0px;top:296px;width:672px;height:2px;background:#111;"></div>
<div style="position:absolute;left:0px;top:381px;width:665px;height:2px;background:#111;"></div>
<div style="position:absolute;left:0px;top:401px;width:665px;height:1px;background:#111;"></div>
<div style="position:absolute;left:0px;top:418px;width:665px;height:2px;background:#111;"></div>
<div style="position:absolute;left:271px;top:382px;width:1px;height:37px;background:#111;"></div>
<div style="position:absolute;left:407px;top:382px;width:1px;height:37px;background:#111;"></div>
<div style="position:absolute;left:531px;top:382px;width:1px;height:37px;background:#111;"></div>
<div style="position:absolute;left:663px;top:382px;width:2px;height:38px;background:#111;"></div>
<div style="position:absolute;left:0px;top:525px;width:672px;height:2px;background:#111;"></div>
<div style="position:absolute;left:509.70000000000005px;top:19.50px;line-height:18px;font-size:14px;color:#111;font-weight:400;white-space:pre;font-family:'Liberation Sans',sans-serif;letter-spacing:0.253px;">[Организация.Телефон]</div>
<div style="position:absolute;left:534.3px;top:38.50px;line-height:18px;font-size:14px;color:#0b0bd8;font-weight:400;white-space:pre;font-family:'Liberation Sans',sans-serif;letter-spacing:0.350px;text-decoration:underline;">[Организация.Сайт]</div>
<div style="position:absolute;left:547.8px;top:58.00px;line-height:18px;font-size:14px;color:#0b0bd8;font-weight:400;white-space:pre;font-family:'Liberation Sans',sans-serif;letter-spacing:-0.522px;text-decoration:underline;">[Организация.Email]</div>
<div style="position:absolute;left:-1092.35px;width:1200px;text-align:right;top:95.00px;line-height:18px;font-size:14px;color:#111;font-weight:400;white-space:pre;font-family:'Liberation Sans',sans-serif;letter-spacing:0.35px;">.Наименование]</div>
<div style="position:absolute;left:315px;top:95.00px;line-height:18px;font-size:14px;color:#111;font-weight:400;white-space:pre;font-family:'Liberation Sans',sans-serif;letter-spacing:0.865px;">БИК</div>
<div style="position:absolute;left:393.6px;top:94.50px;line-height:18px;font-size:14px;color:#111;font-weight:400;white-space:pre;font-family:'Liberation Sans',sans-serif;letter-spacing:0.576px;">[Банковский счет.Банк.БИК]</div>
<div style="position:absolute;left:315px;top:115.50px;line-height:18px;font-size:14px;color:#111;font-weight:400;white-space:pre;font-family:'Liberation Sans',sans-serif;letter-spacing:0.791px;">Сч. №</div>
<div style="position:absolute;left:-1172.05px;width:1200px;text-align:right;top:152.00px;line-height:18px;font-size:14px;color:#111;font-weight:400;white-space:pre;font-family:'Liberation Sans',sans-serif;letter-spacing:0.35px;">ИНН]</div>
<div style="position:absolute;left:80.60000000000002px;top:152.00px;line-height:18px;font-size:14px;color:#111;font-weight:400;white-space:pre;font-family:'Liberation Sans',sans-serif;letter-spacing:0.573px;">КПП</div>
<div style="position:absolute;left:131.8px;top:152.00px;line-height:18px;font-size:14px;color:#111;font-weight:400;white-space:pre;font-family:'Liberation Sans',sans-serif;letter-spacing:0.330px;">[Организация.КПП]</div>
<div style="position:absolute;left:315px;top:152.00px;line-height:18px;font-size:14px;color:#111;font-weight:400;white-space:pre;font-family:'Liberation Sans',sans-serif;letter-spacing:0.791px;">Сч. №</div>
<div style="position:absolute;left:393.6px;top:152.00px;line-height:18px;font-size:14px;color:#111;font-weight:400;white-space:pre;font-family:'Liberation Sans',sans-serif;letter-spacing:0.504px;">[Банковский счет.Номер счета]</div>
<div style="position:absolute;left:-922.15px;width:1200px;text-align:right;top:173.00px;line-height:18px;font-size:14px;color:#111;font-weight:400;white-space:pre;font-family:'Liberation Sans',sans-serif;letter-spacing:0.35px;">вание полное], [Организация.Юр. адрес]</div>
<div style="position:absolute;left:-885.9200000000001px;width:1200px;text-align:right;top:253.60px;line-height:28px;font-size:22px;color:#111;font-weight:700;white-space:pre;font-family:'Liberation Sans',sans-serif;letter-spacing:0.58px;">ту № [Номер.Без префикса]</div>
<div style="position:absolute;left:321px;top:253.60px;line-height:28px;font-size:22px;color:#111;font-weight:700;white-space:pre;font-family:'Liberation Sans',sans-serif;letter-spacing:0.58px;">от [Формат([Дата], "ДЛФ='DD'")]</div>
<div style="position:absolute;left:-780.0px;width:1200px;text-align:right;top:309.00px;line-height:18px;font-size:14px;color:#111;font-weight:700;white-space:pre;font-family:'Liberation Sans',sans-serif;letter-spacing:0.5px;">изация.Наименование полное], [Организация.Юр. адрес]</div>
<div style="position:absolute;left:-809.0px;width:1200px;text-align:right;top:345.50px;line-height:18px;font-size:14px;color:#111;font-weight:700;white-space:pre;font-family:'Liberation Sans',sans-serif;letter-spacing:0.5px;">агент.Наименование полное], [Контрагент.Юр. адрес]</div>
<div style="position:absolute;left:61.5px;top:382.70px;line-height:18px;font-size:14px;color:#111;font-weight:700;white-space:pre;font-family:'Liberation Sans',sans-serif;letter-spacing:0.323px;">Товар</div>
<div style="position:absolute;left:313.8px;top:382.70px;line-height:18px;font-size:14px;color:#111;font-weight:700;white-space:pre;font-family:'Liberation Sans',sans-serif;letter-spacing:0.703px;">Кол-во</div>
<div style="position:absolute;left:451.6px;top:382.70px;line-height:18px;font-size:14px;color:#111;font-weight:700;white-space:pre;font-family:'Liberation Sans',sans-serif;letter-spacing:0.491px;">Цена</div>
<div style="position:absolute;left:573px;top:382.70px;line-height:18px;font-size:14px;color:#111;font-weight:700;white-space:pre;font-family:'Liberation Sans',sans-serif;letter-spacing:0.394px;">Сумма</div>
<div style="position:absolute;left:-1072.05px;width:1200px;text-align:right;top:402.80px;line-height:15px;font-size:12px;color:#111;font-weight:400;white-space:pre;font-family:'Liberation Sans',sans-serif;letter-spacing:0.45px;">атура.Наименование]</div>
<div style="position:absolute;left:280px;top:402.80px;line-height:15px;font-size:12px;color:#111;font-weight:400;white-space:pre;font-family:'Liberation Sans',sans-serif;letter-spacing:0.409px;">[Товары.Количество]</div>
<div style="position:absolute;left:442.29999999999995px;top:402.80px;line-height:15px;font-size:12px;color:#111;font-weight:400;white-space:pre;font-family:'Liberation Sans',sans-serif;letter-spacing:0.412px;">[Товары.Цена]</div>
<div style="position:absolute;left:531.7px;top:402.80px;line-height:15px;font-size:12px;color:#111;font-weight:400;white-space:pre;font-family:'Liberation Sans',sans-serif;letter-spacing:0.115px;transform:scaleY(1.05);">###################</div>
<div style="position:absolute;left:482.9px;top:436.90px;line-height:18px;font-size:14px;color:#111;font-weight:700;white-space:pre;font-family:'Liberation Sans',sans-serif;letter-spacing:0.224px;">Итого:</div>
<div style="position:absolute;left:531.7px;top:436.90px;line-height:18px;font-size:14px;color:#111;font-weight:700;white-space:pre;font-family:'Liberation Sans',sans-serif;letter-spacing:-0.199px;">#################</div>
<div style="position:absolute;left:397.20000000000005px;top:456.90px;line-height:18px;font-size:14px;color:#111;font-weight:700;white-space:pre;font-family:'Liberation Sans',sans-serif;letter-spacing:0.516px;">В том числе НДС:</div>
<div style="position:absolute;left:-809.2px;width:1200px;text-align:right;top:477.00px;line-height:18px;font-size:14px;color:#111;font-weight:400;white-space:pre;font-family:'Liberation Sans',sans-serif;letter-spacing:0.3px;">КоличествоСтрок([Товары])], на сумму [Сумма документа]</div>
<div style="position:absolute;left:-1087.1px;width:1200px;text-align:right;top:497.00px;line-height:18px;font-size:14px;color:#111;font-weight:700;white-space:pre;font-family:'Liberation Sans',sans-serif;letter-spacing:0.4px;">исло прописью]</div>
</div>
<div style="position:absolute;left:722px;top:295px;width:126px;height:4px;background:#e8393a;border-radius:2px;"></div>
<div style="position:absolute;left:685px;top:393px;width:102px;height:4px;background:#e8393a;border-radius:2px;"></div>
<div style="position:absolute;left:179px;top:204px;width:674px;height:16px;overflow:hidden;background:linear-gradient(#fff,#f3f3f3);">
<div style="position:absolute;left:0px;top:0;width:6px;height:17px;overflow:hidden;border-right:1px solid #b8b8b8;box-sizing:border-box;"><div style="position:absolute;left:-27.0px;width:60px;text-align:center;top:2.5px;line-height:16px;font-size:13px;color:#333;">8</div></div>
<div style="position:absolute;left:6px;top:0;width:18px;height:17px;overflow:hidden;border-right:1px solid #b8b8b8;box-sizing:border-box;"><div style="position:absolute;left:-21.0px;width:60px;text-align:center;top:2.5px;line-height:16px;font-size:13px;color:#333;">9</div></div>
<div style="position:absolute;left:24px;top:0;width:25px;height:17px;overflow:hidden;border-right:1px solid #b8b8b8;box-sizing:border-box;"><div style="position:absolute;left:-17.5px;width:60px;text-align:center;top:2.5px;line-height:16px;font-size:13px;color:#333;">10</div></div>
<div style="position:absolute;left:49px;top:0;width:2px;height:17px;overflow:hidden;border-right:1px solid #b8b8b8;box-sizing:border-box;"><div style="position:absolute;left:-29.0px;width:60px;text-align:center;top:2.5px;line-height:16px;font-size:13px;color:#333;"></div></div>
<div style="position:absolute;left:51px;top:0;width:23px;height:17px;overflow:hidden;border-right:1px solid #b8b8b8;box-sizing:border-box;"><div style="position:absolute;left:-18.5px;width:60px;text-align:center;top:2.5px;line-height:16px;font-size:13px;color:#333;">12</div></div>
<div style="position:absolute;left:74px;top:0;width:4px;height:17px;overflow:hidden;border-right:1px solid #b8b8b8;box-sizing:border-box;"><div style="position:absolute;left:-28.0px;width:60px;text-align:center;top:2.5px;line-height:16px;font-size:13px;color:#333;"></div></div>
<div style="position:absolute;left:78px;top:0;width:7px;height:17px;overflow:hidden;border-right:1px solid #b8b8b8;box-sizing:border-box;"><div style="position:absolute;left:-26.5px;width:60px;text-align:center;top:2.5px;line-height:16px;font-size:13px;color:#333;">14</div></div>
<div style="position:absolute;left:85px;top:0;width:17px;height:17px;overflow:hidden;border-right:1px solid #b8b8b8;box-sizing:border-box;"><div style="position:absolute;left:-21.5px;width:60px;text-align:center;top:2.5px;line-height:16px;font-size:13px;color:#333;">15</div></div>
<div style="position:absolute;left:102px;top:0;width:2px;height:17px;overflow:hidden;border-right:1px solid #b8b8b8;box-sizing:border-box;"><div style="position:absolute;left:-29.0px;width:60px;text-align:center;top:2.5px;line-height:16px;font-size:13px;color:#333;"></div></div>
<div style="position:absolute;left:104px;top:0;width:8px;height:17px;overflow:hidden;border-right:1px solid #b8b8b8;box-sizing:border-box;"><div style="position:absolute;left:-26.0px;width:60px;text-align:center;top:2.5px;line-height:16px;font-size:13px;color:#333;">17</div></div>
<div style="position:absolute;left:112px;top:0;width:15px;height:17px;overflow:hidden;border-right:1px solid #b8b8b8;box-sizing:border-box;"><div style="position:absolute;left:-22.5px;width:60px;text-align:center;top:2.5px;line-height:16px;font-size:13px;color:#333;">18</div></div>
<div style="position:absolute;left:127px;top:0;width:2px;height:17px;overflow:hidden;border-right:1px solid #b8b8b8;box-sizing:border-box;"><div style="position:absolute;left:-29.0px;width:60px;text-align:center;top:2.5px;line-height:16px;font-size:13px;color:#333;"></div></div>
<div style="position:absolute;left:129px;top:0;width:9px;height:17px;overflow:hidden;border-right:1px solid #b8b8b8;box-sizing:border-box;"><div style="position:absolute;left:-25.5px;width:60px;text-align:center;top:2.5px;line-height:16px;font-size:13px;color:#333;">20</div></div>
<div style="position:absolute;left:138px;top:0;width:16px;height:17px;overflow:hidden;border-right:1px solid #b8b8b8;box-sizing:border-box;"><div style="position:absolute;left:-22.0px;width:60px;text-align:center;top:2.5px;line-height:16px;font-size:13px;color:#333;">21</div></div>
<div style="position:absolute;left:154px;top:0;width:2px;height:17px;overflow:hidden;border-right:1px solid #b8b8b8;box-sizing:border-box;"><div style="position:absolute;left:-29.0px;width:60px;text-align:center;top:2.5px;line-height:16px;font-size:13px;color:#333;"></div></div>
<div style="position:absolute;left:156px;top:0;width:7px;height:17px;overflow:hidden;border-right:1px solid #b8b8b8;box-sizing:border-box;"><div style="position:absolute;left:-26.5px;width:60px;text-align:center;top:2.5px;line-height:16px;font-size:13px;color:#333;">23</div></div>
<div style="position:absolute;left:163px;top:0;width:17px;height:17px;overflow:hidden;border-right:1px solid #b8b8b8;box-sizing:border-box;"><div style="position:absolute;left:-21.5px;width:60px;text-align:center;top:2.5px;line-height:16px;font-size:13px;color:#333;">24</div></div>
<div style="position:absolute;left:180px;top:0;width:2px;height:17px;overflow:hidden;border-right:1px solid #b8b8b8;box-sizing:border-box;"><div style="position:absolute;left:-29.0px;width:60px;text-align:center;top:2.5px;line-height:16px;font-size:13px;color:#333;"></div></div>
<div style="position:absolute;left:182px;top:0;width:8px;height:17px;overflow:hidden;border-right:1px solid #b8b8b8;box-sizing:border-box;"><div style="position:absolute;left:-26.0px;width:60px;text-align:center;top:2.5px;line-height:16px;font-size:13px;color:#333;">26</div></div>
<div style="position:absolute;left:190px;top:0;width:16px;height:17px;overflow:hidden;border-right:1px solid #b8b8b8;box-sizing:border-box;"><div style="position:absolute;left:-22.0px;width:60px;text-align:center;top:2.5px;line-height:16px;font-size:13px;color:#333;">27</div></div>
<div style="position:absolute;left:206px;top:0;width:3px;height:17px;overflow:hidden;border-right:1px solid #b8b8b8;box-sizing:border-box;"><div style="position:absolute;left:-28.5px;width:60px;text-align:center;top:2.5px;line-height:16px;font-size:13px;color:#333;"></div></div>
<div style="position:absolute;left:209px;top:0;width:8px;height:17px;overflow:hidden;border-right:1px solid #b8b8b8;box-sizing:border-box;"><div style="position:absolute;left:-26.0px;width:60px;text-align:center;top:2.5px;line-height:16px;font-size:13px;color:#333;">29</div></div>
<div style="position:absolute;left:217px;top:0;width:14px;height:17px;overflow:hidden;border-right:1px solid #b8b8b8;box-sizing:border-box;"><div style="position:absolute;left:-23.0px;width:60px;text-align:center;top:2.5px;line-height:16px;font-size:13px;color:#333;">30</div></div>
<div style="position:absolute;left:231px;top:0;width:3px;height:17px;overflow:hidden;border-right:1px solid #b8b8b8;box-sizing:border-box;"><div style="position:absolute;left:-28.5px;width:60px;text-align:center;top:2.5px;line-height:16px;font-size:13px;color:#333;"></div></div>
<div style="position:absolute;left:234px;top:0;width:9px;height:17px;overflow:hidden;border-right:1px solid #b8b8b8;box-sizing:border-box;"><div style="position:absolute;left:-25.5px;width:60px;text-align:center;top:2.5px;line-height:16px;font-size:13px;color:#333;">32</div></div>
<div style="position:absolute;left:243px;top:0;width:16px;height:17px;overflow:hidden;border-right:1px solid #b8b8b8;box-sizing:border-box;"><div style="position:absolute;left:-22.0px;width:60px;text-align:center;top:2.5px;line-height:16px;font-size:13px;color:#333;">33</div></div>
<div style="position:absolute;left:259px;top:0;width:2px;height:17px;overflow:hidden;border-right:1px solid #b8b8b8;box-sizing:border-box;"><div style="position:absolute;left:-29.0px;width:60px;text-align:center;top:2.5px;line-height:16px;font-size:13px;color:#333;"></div></div>
<div style="position:absolute;left:261px;top:0;width:8px;height:17px;overflow:hidden;border-right:1px solid #b8b8b8;box-sizing:border-box;"><div style="position:absolute;left:-26.0px;width:60px;text-align:center;top:2.5px;line-height:16px;font-size:13px;color:#333;">35</div></div>
<div style="position:absolute;left:269px;top:0;width:15px;height:17px;overflow:hidden;border-right:1px solid #b8b8b8;box-sizing:border-box;"><div style="position:absolute;left:-22.5px;width:60px;text-align:center;top:2.5px;line-height:16px;font-size:13px;color:#333;">37</div></div>
<div style="position:absolute;left:284px;top:0;width:2px;height:17px;overflow:hidden;border-right:1px solid #b8b8b8;box-sizing:border-box;"><div style="position:absolute;left:-29.0px;width:60px;text-align:center;top:2.5px;line-height:16px;font-size:13px;color:#333;"></div></div>
<div style="position:absolute;left:286px;top:0;width:8px;height:17px;overflow:hidden;border-right:1px solid #b8b8b8;box-sizing:border-box;"><div style="position:absolute;left:-26.0px;width:60px;text-align:center;top:2.5px;line-height:16px;font-size:13px;color:#333;">39</div></div>
<div style="position:absolute;left:294px;top:0;width:18px;height:17px;overflow:hidden;border-right:1px solid #b8b8b8;box-sizing:border-box;"><div style="position:absolute;left:-21.0px;width:60px;text-align:center;top:2.5px;line-height:16px;font-size:13px;color:#333;">40</div></div>
<div style="position:absolute;left:312px;top:0;width:1px;height:17px;overflow:hidden;border-right:1px solid #b8b8b8;box-sizing:border-box;"><div style="position:absolute;left:-29.5px;width:60px;text-align:center;top:2.5px;line-height:16px;font-size:13px;color:#333;"></div></div>
<div style="position:absolute;left:313px;top:0;width:8px;height:17px;overflow:hidden;border-right:1px solid #b8b8b8;box-sizing:border-box;"><div style="position:absolute;left:-26.0px;width:60px;text-align:center;top:2.5px;line-height:16px;font-size:13px;color:#333;">42</div></div>
<div style="position:absolute;left:321px;top:0;width:15px;height:17px;overflow:hidden;border-right:1px solid #b8b8b8;box-sizing:border-box;"><div style="position:absolute;left:-22.5px;width:60px;text-align:center;top:2.5px;line-height:16px;font-size:13px;color:#333;">43</div></div>
<div style="position:absolute;left:336px;top:0;width:2px;height:17px;overflow:hidden;border-right:1px solid #b8b8b8;box-sizing:border-box;"><div style="position:absolute;left:-29.0px;width:60px;text-align:center;top:2.5px;line-height:16px;font-size:13px;color:#333;"></div></div>
<div style="position:absolute;left:338px;top:0;width:9px;height:17px;overflow:hidden;border-right:1px solid #b8b8b8;box-sizing:border-box;"><div style="position:absolute;left:-25.5px;width:60px;text-align:center;top:2.5px;line-height:16px;font-size:13px;color:#333;">45</div></div>
<div style="position:absolute;left:347px;top:0;width:14px;height:17px;overflow:hidden;border-right:1px solid #b8b8b8;box-sizing:border-box;"><div style="position:absolute;left:-23.0px;width:60px;text-align:center;top:2.5px;line-height:16px;font-size:13px;color:#333;">47</div></div>
<div style="position:absolute;left:361px;top:0;width:2px;height:17px;overflow:hidden;border-right:1px solid #b8b8b8;box-sizing:border-box;"><div style="position:absolute;left:-29.0px;width:60px;text-align:center;top:2.5px;line-height:16px;font-size:13px;color:#333;"></div></div>
<div style="position:absolute;left:363px;top:0;width:23px;height:17px;overflow:hidden;border-right:1px solid #b8b8b8;box-sizing:border-box;"><div style="position:absolute;left:-18.5px;width:60px;text-align:center;top:2.5px;line-height:16px;font-size:13px;color:#333;">49</div></div>
<div style="position:absolute;left:386px;top:0;width:2px;height:17px;overflow:hidden;border-right:1px solid #b8b8b8;box-sizing:border-box;"><div style="position:absolute;left:-29.0px;width:60px;text-align:center;top:2.5px;line-height:16px;font-size:13px;color:#333;"></div></div>
<div style="position:absolute;left:388px;top:0;width:2px;height:17px;overflow:hidden;border-right:1px solid #b8b8b8;box-sizing:border-box;"><div style="position:absolute;left:-29.0px;width:60px;text-align:center;top:2.5px;line-height:16px;font-size:13px;color:#333;">5</div></div>
<div style="position:absolute;left:390px;top:0;width:19px;height:17px;overflow:hidden;border-right:1px solid #b8b8b8;box-sizing:border-box;"><div style="position:absolute;left:-20.5px;width:60px;text-align:center;top:2.5px;line-height:16px;font-size:13px;color:#333;">51</div></div>
<div style="position:absolute;left:409px;top:0;width:7px;height:17px;overflow:hidden;border-right:1px solid #b8b8b8;box-sizing:border-box;"><div style="position:absolute;left:-26.5px;width:60px;text-align:center;top:2.5px;line-height:16px;font-size:13px;color:#333;">52</div></div>
<div style="position:absolute;left:416px;top:0;width:9px;height:17px;overflow:hidden;border-right:1px solid #b8b8b8;box-sizing:border-box;"><div style="position:absolute;left:-25.5px;width:60px;text-align:center;top:2.5px;line-height:16px;font-size:13px;color:#333;">53</div></div>
<div style="position:absolute;left:425px;top:0;width:17px;height:17px;overflow:hidden;border-right:1px solid #b8b8b8;box-sizing:border-box;"><div style="position:absolute;left:-21.5px;width:60px;text-align:center;top:2.5px;line-height:16px;font-size:13px;color:#333;">54</div></div>
<div style="position:absolute;left:442px;top:0;width:26px;height:17px;overflow:hidden;border-right:1px solid #b8b8b8;box-sizing:border-box;"><div style="position:absolute;left:-17.0px;width:60px;text-align:center;top:2.5px;line-height:16px;font-size:13px;color:#333;">55</div></div>
<div style="position:absolute;left:468px;top:0;width:27px;height:17px;overflow:hidden;border-right:1px solid #b8b8b8;box-sizing:border-box;"><div style="position:absolute;left:-16.5px;width:60px;text-align:center;top:2.5px;line-height:16px;font-size:13px;color:#333;">56</div></div>
<div style="position:absolute;left:495px;top:0;width:26px;height:17px;overflow:hidden;border-right:1px solid #b8b8b8;box-sizing:border-box;"><div style="position:absolute;left:-17.0px;width:60px;text-align:center;top:2.5px;line-height:16px;font-size:13px;color:#333;">57</div></div>
<div style="position:absolute;left:521px;top:0;width:12px;height:17px;overflow:hidden;border-right:1px solid #b8b8b8;box-sizing:border-box;"><div style="position:absolute;left:-24.0px;width:60px;text-align:center;top:2.5px;line-height:16px;font-size:13px;color:#333;">58</div></div>
<div style="position:absolute;left:533px;top:0;width:15px;height:17px;overflow:hidden;border-right:1px solid #b8b8b8;box-sizing:border-box;"><div style="position:absolute;left:-22.5px;width:60px;text-align:center;top:2.5px;line-height:16px;font-size:13px;color:#333;">59</div></div>
<div style="position:absolute;left:548px;top:0;width:25px;height:17px;overflow:hidden;border-right:1px solid #b8b8b8;box-sizing:border-box;"><div style="position:absolute;left:-17.5px;width:60px;text-align:center;top:2.5px;line-height:16px;font-size:13px;color:#333;">60</div></div>
<div style="position:absolute;left:573px;top:0;width:28px;height:17px;overflow:hidden;border-right:1px solid #b8b8b8;box-sizing:border-box;"><div style="position:absolute;left:-16.0px;width:60px;text-align:center;top:2.5px;line-height:16px;font-size:13px;color:#333;">61</div></div>
<div style="position:absolute;left:601px;top:0;width:25px;height:17px;overflow:hidden;border-right:1px solid #b8b8b8;box-sizing:border-box;"><div style="position:absolute;left:-17.5px;width:60px;text-align:center;top:2.5px;line-height:16px;font-size:13px;color:#333;">62</div></div>
<div style="position:absolute;left:626px;top:0;width:26px;height:17px;overflow:hidden;border-right:1px solid #b8b8b8;box-sizing:border-box;"><div style="position:absolute;left:-17.0px;width:60px;text-align:center;top:2.5px;line-height:16px;font-size:13px;color:#333;">63</div></div>
<div style="position:absolute;left:652px;top:0;width:12px;height:17px;overflow:hidden;border-right:1px solid #b8b8b8;box-sizing:border-box;"><div style="position:absolute;left:-24.0px;width:60px;text-align:center;top:2.5px;line-height:16px;font-size:13px;color:#333;">64</div></div>
<div style="position:absolute;left:664px;top:0;width:9px;height:17px;overflow:hidden;border-right:1px solid #b8b8b8;box-sizing:border-box;"><div style="position:absolute;left:-25.5px;width:60px;text-align:center;top:2.5px;line-height:16px;font-size:13px;color:#333;">65</div></div>
</div>
<div style="position:absolute;left:179px;top:220px;width:673px;height:1px;background:#b0b0b0;"></div>
<div style="position:absolute;left:138px;top:204px;width:42px;height:17px;background:#fff;border-right:1px solid #b0b0b0;border-bottom:1px solid #b0b0b0;box-sizing:border-box;"></div>
<div style="position:absolute;left:138px;top:221px;width:42px;height:592px;overflow:hidden;">
<div style="position:absolute;left:0;top:0px;width:42px;height:19px;background:linear-gradient(#ececec,#e0e0e0);border-bottom:1px solid #a8a8a8;border-right:1px solid #a8a8a8;box-sizing:border-box;overflow:hidden;"><div style="position:absolute;left:0;width:100%;text-align:center;top:1.8px;line-height:16px;font-size:13px;color:#222;font-weight:700;">1</div></div>
<div style="position:absolute;left:0;top:19px;width:42px;height:19px;background:linear-gradient(#fff,#f6f6f6);border-bottom:1px solid #a8a8a8;border-right:1px solid #a8a8a8;box-sizing:border-box;overflow:hidden;"><div style="position:absolute;left:0;width:100%;text-align:center;top:1.8px;line-height:16px;font-size:13px;color:#222;font-weight:400;">2</div></div>
<div style="position:absolute;left:0;top:38px;width:42px;height:19px;background:linear-gradient(#fff,#f6f6f6);border-bottom:1px solid #a8a8a8;border-right:1px solid #a8a8a8;box-sizing:border-box;overflow:hidden;"><div style="position:absolute;left:0;width:100%;text-align:center;top:1.8px;line-height:16px;font-size:13px;color:#222;font-weight:400;">3</div></div>
<div style="position:absolute;left:0;top:57px;width:42px;height:19px;background:linear-gradient(#fff,#f6f6f6);border-bottom:1px solid #a8a8a8;border-right:1px solid #a8a8a8;box-sizing:border-box;overflow:hidden;"><div style="position:absolute;left:0;width:100%;text-align:center;top:1.8px;line-height:16px;font-size:13px;color:#222;font-weight:400;">4</div></div>
<div style="position:absolute;left:0;top:76px;width:42px;height:19px;background:linear-gradient(#fff,#f6f6f6);border-bottom:1px solid #a8a8a8;border-right:1px solid #a8a8a8;box-sizing:border-box;overflow:hidden;"><div style="position:absolute;left:0;width:100%;text-align:center;top:1.8px;line-height:16px;font-size:13px;color:#222;font-weight:400;">5</div></div>
<div style="position:absolute;left:0;top:95px;width:42px;height:20px;background:linear-gradient(#fff,#f6f6f6);border-bottom:1px solid #a8a8a8;border-right:1px solid #a8a8a8;box-sizing:border-box;overflow:hidden;"><div style="position:absolute;left:0;width:100%;text-align:center;top:2.3px;line-height:16px;font-size:13px;color:#222;font-weight:400;">6</div></div>
<div style="position:absolute;left:0;top:115px;width:42px;height:19px;background:linear-gradient(#fff,#f6f6f6);border-bottom:1px solid #a8a8a8;border-right:1px solid #a8a8a8;box-sizing:border-box;overflow:hidden;"><div style="position:absolute;left:0;width:100%;text-align:center;top:1.8px;line-height:16px;font-size:13px;color:#222;font-weight:400;">7</div></div>
<div style="position:absolute;left:0;top:134px;width:42px;height:18px;background:linear-gradient(#fff,#f6f6f6);border-bottom:1px solid #a8a8a8;border-right:1px solid #a8a8a8;box-sizing:border-box;overflow:hidden;"><div style="position:absolute;left:0;width:100%;text-align:center;top:1.3px;line-height:16px;font-size:13px;color:#222;font-weight:400;">8</div></div>
<div style="position:absolute;left:0;top:152px;width:42px;height:20px;background:linear-gradient(#fff,#f6f6f6);border-bottom:1px solid #a8a8a8;border-right:1px solid #a8a8a8;box-sizing:border-box;overflow:hidden;"><div style="position:absolute;left:0;width:100%;text-align:center;top:2.3px;line-height:16px;font-size:13px;color:#222;font-weight:400;">9</div></div>
<div style="position:absolute;left:0;top:172px;width:42px;height:22px;background:linear-gradient(#fff,#f6f6f6);border-bottom:1px solid #a8a8a8;border-right:1px solid #a8a8a8;box-sizing:border-box;overflow:hidden;"><div style="position:absolute;left:0;width:100%;text-align:center;top:3.3px;line-height:16px;font-size:13px;color:#222;font-weight:400;">10</div></div>
<div style="position:absolute;left:0;top:194px;width:42px;height:20px;background:linear-gradient(#fff,#f6f6f6);border-bottom:1px solid #a8a8a8;border-right:1px solid #a8a8a8;box-sizing:border-box;overflow:hidden;"><div style="position:absolute;left:0;width:100%;text-align:center;top:2.3px;line-height:16px;font-size:13px;color:#222;font-weight:400;">11</div></div>
<div style="position:absolute;left:0;top:214px;width:42px;height:18px;background:linear-gradient(#fff,#f6f6f6);border-bottom:1px solid #a8a8a8;border-right:1px solid #a8a8a8;box-sizing:border-box;overflow:hidden;"><div style="position:absolute;left:0;width:100%;text-align:center;top:1.3px;line-height:16px;font-size:13px;color:#222;font-weight:400;">12</div></div>
<div style="position:absolute;left:0;top:232px;width:42px;height:19px;background:linear-gradient(#fff,#f6f6f6);border-bottom:1px solid #a8a8a8;border-right:1px solid #a8a8a8;box-sizing:border-box;overflow:hidden;"><div style="position:absolute;left:0;width:100%;text-align:center;top:1.8px;line-height:16px;font-size:13px;color:#222;font-weight:400;">13</div></div>
<div style="position:absolute;left:0;top:251px;width:42px;height:17px;background:linear-gradient(#fff,#f6f6f6);border-bottom:1px solid #a8a8a8;border-right:1px solid #a8a8a8;box-sizing:border-box;overflow:hidden;"><div style="position:absolute;left:0;width:100%;text-align:center;top:0.8px;line-height:16px;font-size:13px;color:#222;font-weight:400;">14</div></div>
<div style="position:absolute;left:0;top:268px;width:42px;height:19px;background:linear-gradient(#fff,#f6f6f6);border-bottom:1px solid #a8a8a8;border-right:1px solid #a8a8a8;box-sizing:border-box;overflow:hidden;"><div style="position:absolute;left:0;width:100%;text-align:center;top:1.8px;line-height:16px;font-size:13px;color:#222;font-weight:400;">15</div></div>
<div style="position:absolute;left:0;top:287px;width:42px;height:10px;background:linear-gradient(#fff,#f6f6f6);border-bottom:1px solid #a8a8a8;border-right:1px solid #a8a8a8;box-sizing:border-box;overflow:hidden;"><div style="position:absolute;left:0;width:100%;text-align:center;top:-2.7px;line-height:16px;font-size:13px;color:#222;font-weight:400;">16</div></div>
<div style="position:absolute;left:0;top:297px;width:42px;height:12px;background:linear-gradient(#fff,#f6f6f6);border-bottom:1px solid #a8a8a8;border-right:1px solid #a8a8a8;box-sizing:border-box;overflow:hidden;"><div style="position:absolute;left:0;width:100%;text-align:center;top:-1.7px;line-height:16px;font-size:13px;color:#222;font-weight:400;">17</div></div>
<div style="position:absolute;left:0;top:309px;width:42px;height:19px;background:linear-gradient(#fff,#f6f6f6);border-bottom:1px solid #a8a8a8;border-right:1px solid #a8a8a8;box-sizing:border-box;overflow:hidden;"><div style="position:absolute;left:0;width:100%;text-align:center;top:1.8px;line-height:16px;font-size:13px;color:#222;font-weight:400;">18</div></div>
<div style="position:absolute;left:0;top:328px;width:42px;height:18px;background:linear-gradient(#fff,#f6f6f6);border-bottom:1px solid #a8a8a8;border-right:1px solid #a8a8a8;box-sizing:border-box;overflow:hidden;"><div style="position:absolute;left:0;width:100%;text-align:center;top:1.3px;line-height:16px;font-size:13px;color:#222;font-weight:400;">19</div></div>
<div style="position:absolute;left:0;top:346px;width:42px;height:20px;background:linear-gradient(#fff,#f6f6f6);border-bottom:1px solid #a8a8a8;border-right:1px solid #a8a8a8;box-sizing:border-box;overflow:hidden;"><div style="position:absolute;left:0;width:100%;text-align:center;top:2.3px;line-height:16px;font-size:13px;color:#222;font-weight:400;">20</div></div>
<div style="position:absolute;left:0;top:366px;width:42px;height:16px;background:linear-gradient(#fff,#f6f6f6);border-bottom:1px solid #a8a8a8;border-right:1px solid #a8a8a8;box-sizing:border-box;overflow:hidden;"><div style="position:absolute;left:0;width:100%;text-align:center;top:0.3px;line-height:16px;font-size:13px;color:#222;font-weight:400;">21</div></div>
<div style="position:absolute;left:0;top:382px;width:42px;height:20px;background:linear-gradient(#fff,#f6f6f6);border-bottom:1px solid #a8a8a8;border-right:1px solid #a8a8a8;box-sizing:border-box;overflow:hidden;"><div style="position:absolute;left:0;width:100%;text-align:center;top:2.3px;line-height:16px;font-size:13px;color:#222;font-weight:400;">22</div></div>
<div style="position:absolute;left:0;top:402px;width:42px;height:18px;background:linear-gradient(#fff,#f6f6f6);border-bottom:1px solid #a8a8a8;border-right:1px solid #a8a8a8;box-sizing:border-box;overflow:hidden;"><div style="position:absolute;left:0;width:100%;text-align:center;top:1.3px;line-height:16px;font-size:13px;color:#222;font-weight:400;">23</div></div>
<div style="position:absolute;left:0;top:420px;width:42px;height:18px;background:linear-gradient(#fff,#f6f6f6);border-bottom:1px solid #a8a8a8;border-right:1px solid #a8a8a8;box-sizing:border-box;overflow:hidden;"><div style="position:absolute;left:0;width:100%;text-align:center;top:1.3px;line-height:16px;font-size:13px;color:#222;font-weight:400;">24</div></div>
<div style="position:absolute;left:0;top:438px;width:42px;height:18px;background:linear-gradient(#fff,#f6f6f6);border-bottom:1px solid #a8a8a8;border-right:1px solid #a8a8a8;box-sizing:border-box;overflow:hidden;"><div style="position:absolute;left:0;width:100%;text-align:center;top:1.3px;line-height:16px;font-size:13px;color:#222;font-weight:400;">25</div></div>
<div style="position:absolute;left:0;top:456px;width:42px;height:21px;background:linear-gradient(#fff,#f6f6f6);border-bottom:1px solid #a8a8a8;border-right:1px solid #a8a8a8;box-sizing:border-box;overflow:hidden;"><div style="position:absolute;left:0;width:100%;text-align:center;top:2.8px;line-height:16px;font-size:13px;color:#222;font-weight:400;">26</div></div>
<div style="position:absolute;left:0;top:477px;width:42px;height:19px;background:linear-gradient(#fff,#f6f6f6);border-bottom:1px solid #a8a8a8;border-right:1px solid #a8a8a8;box-sizing:border-box;overflow:hidden;"><div style="position:absolute;left:0;width:100%;text-align:center;top:1.8px;line-height:16px;font-size:13px;color:#222;font-weight:400;">27</div></div>
<div style="position:absolute;left:0;top:496px;width:42px;height:20px;background:linear-gradient(#fff,#f6f6f6);border-bottom:1px solid #a8a8a8;border-right:1px solid #a8a8a8;box-sizing:border-box;overflow:hidden;"><div style="position:absolute;left:0;width:100%;text-align:center;top:2.3px;line-height:16px;font-size:13px;color:#222;font-weight:400;">28</div></div>
<div style="position:absolute;left:0;top:516px;width:42px;height:11px;background:linear-gradient(#fff,#f6f6f6);border-bottom:1px solid #a8a8a8;border-right:1px solid #a8a8a8;box-sizing:border-box;overflow:hidden;"><div style="position:absolute;left:0;width:100%;text-align:center;top:-2.2px;line-height:16px;font-size:13px;color:#222;font-weight:400;">29</div></div>
<div style="position:absolute;left:0;top:527px;width:42px;height:19px;background:linear-gradient(#fff,#f6f6f6);border-bottom:1px solid #a8a8a8;border-right:1px solid #a8a8a8;box-sizing:border-box;overflow:hidden;"><div style="position:absolute;left:0;width:100%;text-align:center;top:1.8px;line-height:16px;font-size:13px;color:#222;font-weight:400;">30</div></div>
<div style="position:absolute;left:0;top:546px;width:42px;height:20px;background:linear-gradient(#fff,#f6f6f6);border-bottom:1px solid #a8a8a8;border-right:1px solid #a8a8a8;box-sizing:border-box;overflow:hidden;"><div style="position:absolute;left:0;width:100%;text-align:center;top:2.3px;line-height:16px;font-size:13px;color:#222;font-weight:400;">31</div></div>
<div style="position:absolute;left:0;top:566px;width:42px;height:22px;background:linear-gradient(#fff,#f6f6f6);border-bottom:1px solid #a8a8a8;border-right:1px solid #a8a8a8;box-sizing:border-box;overflow:hidden;"><div style="position:absolute;left:0;width:100%;text-align:center;top:3.3px;line-height:16px;font-size:13px;color:#222;font-weight:400;">32</div></div>
<div style="position:absolute;left:0;top:588px;width:42px;height:18px;background:linear-gradient(#fff,#f6f6f6);border-bottom:1px solid #a8a8a8;border-right:1px solid #a8a8a8;box-sizing:border-box;overflow:hidden;"><div style="position:absolute;left:0;width:100%;text-align:center;top:1.3px;line-height:16px;font-size:13px;color:#222;font-weight:400;">33</div></div>
</div>
<div style="position:absolute;left:853px;top:203px;width:14px;height:610px;background:#fff;"></div>
<svg style="position:absolute;left:856px;top:210px;" width="8" height="5" viewBox="0 0 8 5"><path d="M0 5H8L4 0Z" fill="#c8c8c8"/></svg>
<div style="position:absolute;left:856px;top:226px;width:8px;height:582px;background:#d6d6d6;border-radius:4px;"></div>
<div style="position:absolute;left:856px;top:226px;width:8px;height:485px;background:#a0a0a0;border-radius:4px;"></div>
<svg style="position:absolute;left:856px;top:801px;" width="8" height="5" viewBox="0 0 8 5"><path d="M0 0H8L4 5Z" fill="#666"/></svg>
<div style="position:absolute;left:137px;top:813px;width:730px;height:15px;background:#fff;"></div>
<svg style="position:absolute;left:146px;top:817px;" width="5" height="8" viewBox="0 0 5 8"><path d="M5 0V8L0 4Z" fill="#666"/></svg>
<div style="position:absolute;left:160px;top:817px;width:670px;height:8px;background:#d6d6d6;border-radius:4px;"></div>
<div style="position:absolute;left:293px;top:817px;width:537px;height:8px;background:#a0a0a0;border-radius:4px;"></div>
<svg style="position:absolute;left:840px;top:817px;" width="5" height="8" viewBox="0 0 5 8"><path d="M0 0V8L5 4Z" fill="#666"/></svg>
<div style="position:absolute;left:136px;top:833px;width:732px;height:1px;background:repeating-linear-gradient(90deg,#d4d4d4 0 4px,transparent 4px 7px);"></div>
<div style="position:absolute;left:872px;top:201px;width:1px;height:854px;background:repeating-linear-gradient(#d4d4d4 0 4px,transparent 4px 7px);"></div>
<div style="position:absolute;left:139px;top:842.50px;line-height:16px;font-size:13px;color:#1e9a3c;font-weight:400;white-space:pre;font-family:'Liberation Sans',sans-serif;letter-spacing:-0.101px;">Текст выбранной ячейки</div>
<div style="position:absolute;left:136px;top:872px;width:732px;height:176px;border:1px solid #a8a8a8;box-sizing:border-box;background:#fff;"></div>
<div style="position:absolute;left:137px;top:873px;width:16px;height:174px;background:repeating-conic-gradient(#e4e4e4 0 25%,#fbfbfb 0 50%) 0 0/2px 2px;"></div>
<div style="position:absolute;left:878px;top:204px;width:600px;height:25px;border:1px solid #b8b8b8;border-radius:2px;box-sizing:border-box;background:#fff;"></div>
<div style="position:absolute;left:881px;top:208.50px;line-height:16px;font-size:13px;color:#b4b4b4;font-weight:400;white-space:pre;font-family:'Liberation Sans',sans-serif;letter-spacing:-0.031px;">Организация.Email</div>
<div style="position:absolute;left:878px;top:238px;width:586px;height:384px;border:1px solid #a8a8a8;box-sizing:border-box;background:#fff;"></div>
<div style="position:absolute;left:879px;top:239px;width:584px;height:30px;background:#f2f2f2;border-bottom:1px solid #e0e0e0;box-sizing:border-box;"></div>
<div style="position:absolute;left:1181px;top:239px;width:1px;height:30px;background:#dcdcdc;"></div>
<div style="position:absolute;left:887px;top:245.50px;line-height:16px;font-size:13px;color:#333;font-weight:400;white-space:pre;font-family:'Liberation Sans',sans-serif;letter-spacing:-0.527px;">Поле</div>
<div style="position:absolute;left:1190px;top:245.50px;line-height:16px;font-size:13px;color:#333;font-weight:400;white-space:pre;font-family:'Liberation Sans',sans-serif;letter-spacing:-0.196px;">Образец</div>
<div style="position:absolute;left:879px;top:473px;width:584px;height:29px;background:#fdf1c4;"></div>
<div style="position:absolute;left:947px;top:473px;width:42px;height:29px;background:#fbe49c;border:2px solid #f2c94c;box-sizing:border-box;border-radius:1px;"></div>
<svg style="position:absolute;left:889px;top:280px;" width="10" height="10" viewBox="0 0 10 10"><circle cx="5" cy="5" r="4.3" fill="#fff" stroke="#a8a8a8" stroke-width="1"/><path d="M2.2 5H7.8" stroke="#707070" stroke-width="0.9"/><path d="M5 2.2V7.8" stroke="#707070" stroke-width="0.9"/></svg>
<svg style="position:absolute;left:910px;top:279px;" width="8" height="12" viewBox="0 0 8 12"><path d="M2 1 L6.5 6 L2 11" fill="none" stroke="#555" stroke-width="1.1"/></svg>
<div style="position:absolute;left:932px;top:277.00px;line-height:16px;font-size:13px;color:#333;font-weight:400;white-space:pre;font-family:'Liberation Sans',sans-serif;letter-spacing:-0.217px;">Валюта</div>
<div style="position:absolute;left:1190px;top:277.00px;line-height:16px;font-size:13px;color:#333;font-weight:400;white-space:pre;font-family:'Liberation Sans',sans-serif;letter-spacing:-0.318px;">RUB</div>
<svg style="position:absolute;left:889px;top:309px;" width="10" height="10" viewBox="0 0 10 10"><circle cx="5" cy="5" r="4.3" fill="#fff" stroke="#a8a8a8" stroke-width="1"/><path d="M2.2 5H7.8" stroke="#707070" stroke-width="0.9"/><path d="M5 2.2V7.8" stroke="#707070" stroke-width="0.9"/></svg>
<svg style="position:absolute;left:908px;top:307px;" width="12" height="13" viewBox="0 0 12 13"><g fill="none" stroke="#787878" stroke-width="1"><path d="M0.5 3.5H11.5V12.5H0.5Z"/><path d="M3.5 0.5V4M8.5 0.5V4"/></g><g fill="#787878"><rect x="2" y="6" width="2" height="2"/><rect x="5" y="6" width="2" height="2"/><rect x="8" y="6" width="2" height="2"/><rect x="2" y="9" width="2" height="2"/><rect x="5" y="9" width="2" height="2"/></g></svg>
<div style="position:absolute;left:932px;top:306.00px;line-height:16px;font-size:13px;color:#333;font-weight:400;white-space:pre;font-family:'Liberation Sans',sans-serif;letter-spacing:-0.274px;">Дата</div>
<div style="position:absolute;left:1190px;top:306.00px;line-height:16px;font-size:13px;color:#333;font-weight:400;white-space:pre;font-family:'Liberation Sans',sans-serif;letter-spacing:-0.080px;">29.11.2024 20:24:23</div>
<svg style="position:absolute;left:889px;top:338px;" width="10" height="10" viewBox="0 0 10 10"><circle cx="5" cy="5" r="4.3" fill="#fff" stroke="#a8a8a8" stroke-width="1"/><path d="M2.2 5H7.8" stroke="#707070" stroke-width="0.9"/><path d="M5 2.2V7.8" stroke="#707070" stroke-width="0.9"/></svg>
<svg style="position:absolute;left:908px;top:336px;" width="12" height="13" viewBox="0 0 12 13"><g fill="none" stroke="#787878" stroke-width="1"><path d="M0.5 3.5H11.5V12.5H0.5Z"/><path d="M3.5 0.5V4M8.5 0.5V4"/></g><g fill="#787878"><rect x="2" y="6" width="2" height="2"/><rect x="5" y="6" width="2" height="2"/><rect x="8" y="6" width="2" height="2"/><rect x="2" y="9" width="2" height="2"/><rect x="5" y="9" width="2" height="2"/></g></svg>
<div style="position:absolute;left:932px;top:335.00px;line-height:16px;font-size:13px;color:#333;font-weight:400;white-space:pre;font-family:'Liberation Sans',sans-serif;letter-spacing:-0.227px;">Дата оплаты</div>
<div style="position:absolute;left:1190px;top:335.00px;line-height:16px;font-size:13px;color:#333;font-weight:400;white-space:pre;font-family:'Liberation Sans',sans-serif;letter-spacing:-0.208px;">05.12.2024</div>
<svg style="position:absolute;left:909px;top:366px;" width="10" height="11" viewBox="0 0 10 11"><g fill="none" stroke="#6a6a6a" stroke-width="1"><path d="M0.5 3 V1 H9.5 V3"/><path d="M5 1 V10"/><path d="M3 9.8 H7"/></g></svg>
<div style="position:absolute;left:932px;top:364.00px;line-height:16px;font-size:13px;color:#333;font-weight:400;white-space:pre;font-family:'Liberation Sans',sans-serif;letter-spacing:-0.172px;">Комментарий</div>
<svg style="position:absolute;left:889px;top:396px;" width="10" height="10" viewBox="0 0 10 10"><circle cx="5" cy="5" r="4.3" fill="#fff" stroke="#a8a8a8" stroke-width="1"/><path d="M2.2 5H7.8" stroke="#707070" stroke-width="0.9"/><path d="M5 2.2V7.8" stroke="#707070" stroke-width="0.9"/></svg>
<svg style="position:absolute;left:910px;top:395px;" width="8" height="12" viewBox="0 0 8 12"><path d="M2 1 L6.5 6 L2 11" fill="none" stroke="#555" stroke-width="1.1"/></svg>
<div style="position:absolute;left:932px;top:393.00px;line-height:16px;font-size:13px;color:#333;font-weight:400;white-space:pre;font-family:'Liberation Sans',sans-serif;letter-spacing:-0.222px;">Контрагент</div>
<div style="position:absolute;left:1190px;top:393.00px;line-height:16px;font-size:13px;color:#333;font-weight:400;white-space:pre;font-family:'Liberation Sans',sans-serif;letter-spacing:-0.112px;">МегаШоп, ООО</div>
<svg style="position:absolute;left:889px;top:425px;" width="10" height="10" viewBox="0 0 10 10"><circle cx="5" cy="5" r="4.3" fill="#fff" stroke="#a8a8a8" stroke-width="1"/><path d="M2.2 5H7.8" stroke="#707070" stroke-width="0.9"/><path d="M5 2.2V7.8" stroke="#707070" stroke-width="0.9"/></svg>
<svg style="position:absolute;left:909px;top:424px;" width="10" height="11" viewBox="0 0 10 11"><g fill="none" stroke="#6a6a6a" stroke-width="1"><path d="M0.5 3 V1 H9.5 V3"/><path d="M5 1 V10"/><path d="M3 9.8 H7"/></g></svg>
<div style="position:absolute;left:932px;top:422.00px;line-height:16px;font-size:13px;color:#333;font-weight:400;white-space:pre;font-family:'Liberation Sans',sans-serif;letter-spacing:-0.203px;">Номер</div>
<div style="position:absolute;left:1190px;top:422.00px;line-height:16px;font-size:13px;color:#333;font-weight:400;white-space:pre;font-family:'Liberation Sans',sans-serif;letter-spacing:-0.314px;">УМ-4</div>
<svg style="position:absolute;left:889px;top:454px;" width="10" height="10" viewBox="0 0 10 10"><circle cx="5" cy="5" r="4.3" fill="#fff" stroke="#a8a8a8" stroke-width="1"/><path d="M2.2 5H7.8" stroke="#707070" stroke-width="0.9"/></svg>
<svg style="position:absolute;left:910px;top:453px;" width="8" height="12" viewBox="0 0 8 12"><path d="M2 1 L6.5 6 L2 11" fill="none" stroke="#555" stroke-width="1.1"/></svg>
<div style="position:absolute;left:932px;top:451.00px;line-height:16px;font-size:13px;color:#333;font-weight:400;white-space:pre;font-family:'Liberation Sans',sans-serif;letter-spacing:-0.164px;">Организация</div>
<div style="position:absolute;left:1190px;top:451.00px;line-height:16px;font-size:13px;color:#333;font-weight:400;white-space:pre;font-family:'Liberation Sans',sans-serif;letter-spacing:-0.193px;">Бетта Электроникс</div>
<svg style="position:absolute;left:928px;top:482px;" width="10" height="11" viewBox="0 0 10 11"><g fill="none" stroke="#6a6a6a" stroke-width="1"><path d="M0.5 3 V1 H9.5 V3"/><path d="M5 1 V10"/><path d="M3 9.8 H7"/></g></svg>
<div style="position:absolute;left:951px;top:480.00px;line-height:16px;font-size:13px;color:#333;font-weight:400;white-space:pre;font-family:'Liberation Sans',sans-serif;letter-spacing:-0.063px;">Email</div>
<div style="position:absolute;left:1190px;top:480.00px;line-height:16px;font-size:13px;color:#333;font-weight:400;white-space:pre;font-family:'Liberation Sans',sans-serif;letter-spacing:-0.039px;">info@testmail.ru</div>
<svg style="position:absolute;left:928px;top:512px;" width="10" height="11" viewBox="0 0 10 11"><g fill="none" stroke="#6a6a6a" stroke-width="1"><path d="M0.5 3 V1 H9.5 V3"/><path d="M5 1 V10"/><path d="M3 9.8 H7"/></g></svg>
<div style="position:absolute;left:951px;top:509.00px;line-height:16px;font-size:13px;color:#333;font-weight:400;white-space:pre;font-family:'Liberation Sans',sans-serif;letter-spacing:-0.608px;">ИНН</div>
<div style="position:absolute;left:1190px;top:509.00px;line-height:16px;font-size:13px;color:#333;font-weight:400;white-space:pre;font-family:'Liberation Sans',sans-serif;letter-spacing:-0.261px;">1241412</div>
<svg style="position:absolute;left:928px;top:540px;" width="10" height="11" viewBox="0 0 10 11"><g fill="none" stroke="#6a6a6a" stroke-width="1"><path d="M0.5 3 V1 H9.5 V3"/><path d="M5 1 V10"/><path d="M3 9.8 H7"/></g></svg>
<div style="position:absolute;left:951px;top:538.00px;line-height:16px;font-size:13px;color:#333;font-weight:400;white-space:pre;font-family:'Liberation Sans',sans-serif;letter-spacing:-0.036px;">Код</div>
<div style="position:absolute;left:1190px;top:538.00px;line-height:16px;font-size:13px;color:#333;font-weight:400;white-space:pre;font-family:'Liberation Sans',sans-serif;letter-spacing:-0.286px;">000000002</div>
<svg style="position:absolute;left:928px;top:570px;" width="10" height="11" viewBox="0 0 10 11"><g fill="none" stroke="#6a6a6a" stroke-width="1"><path d="M0.5 3 V1 H9.5 V3"/><path d="M5 1 V10"/><path d="M3 9.8 H7"/></g></svg>
<div style="position:absolute;left:951px;top:567.00px;line-height:16px;font-size:13px;color:#333;font-weight:400;white-space:pre;font-family:'Liberation Sans',sans-serif;letter-spacing:-0.289px;">КПП</div>
<div style="position:absolute;left:1190px;top:567.00px;line-height:16px;font-size:13px;color:#333;font-weight:400;white-space:pre;font-family:'Liberation Sans',sans-serif;letter-spacing:-0.261px;">1241412</div>
<svg style="position:absolute;left:908px;top:599px;" width="10" height="10" viewBox="0 0 10 10"><circle cx="5" cy="5" r="4.3" fill="#fff" stroke="#a8a8a8" stroke-width="1"/><path d="M2.2 5H7.8" stroke="#707070" stroke-width="0.9"/><path d="M5 2.2V7.8" stroke="#707070" stroke-width="0.9"/></svg>
<svg style="position:absolute;left:928px;top:598px;" width="10" height="11" viewBox="0 0 10 11"><g fill="none" stroke="#6a6a6a" stroke-width="1"><path d="M0.5 3 V1 H9.5 V3"/><path d="M5 1 V10"/><path d="M3 9.8 H7"/></g></svg>
<div style="position:absolute;left:951px;top:596.00px;line-height:16px;font-size:13px;color:#333;font-weight:400;white-space:pre;font-family:'Liberation Sans',sans-serif;letter-spacing:-0.219px;">Наименование</div>
<div style="position:absolute;left:1190px;top:596.00px;line-height:16px;font-size:13px;color:#333;font-weight:400;white-space:pre;font-family:'Liberation Sans',sans-serif;letter-spacing:-0.193px;">Бетта Электроникс</div>
<div style="position:absolute;left:878px;top:626px;width:586px;height:1px;background:repeating-linear-gradient(90deg,#d0d0d0 0 4px,transparent 4px 7px);"></div>
<div style="position:absolute;left:878px;top:631px;width:600px;height:25px;border:1px solid #b8b8b8;border-radius:2px;box-sizing:border-box;background:#fff;"></div>
<div style="position:absolute;left:881px;top:635.50px;line-height:16px;font-size:13px;color:#b4b4b4;font-weight:400;white-space:pre;font-family:'Liberation Sans',sans-serif;letter-spacing:-0.179px;">Найти оператор или функцию...</div>
<div style="position:absolute;left:878px;top:667px;width:586px;height:381px;border:1px solid #a8a8a8;box-sizing:border-box;background:#fff;"></div>
<div style="position:absolute;left:930px;top:668px;width:216px;height:29px;background:#fbe293;"></div>
<svg style="position:absolute;left:889px;top:678px;" width="10" height="10" viewBox="0 0 10 10"><circle cx="5" cy="5" r="4.3" fill="#fff" stroke="#a8a8a8" stroke-width="1"/><path d="M2.2 5H7.8" stroke="#707070" stroke-width="0.9"/><path d="M5 2.2V7.8" stroke="#707070" stroke-width="0.9"/></svg>
<svg style="position:absolute;left:906px;top:676px;" width="15" height="14" viewBox="0 0 15 14"><path d="M0.5 1.5H5.5L7 3H14.5V13.5H0.5Z" fill="none" stroke="#555" stroke-width="1"/><path d="M0.5 5.5H14.5" stroke="#555"/></svg>
<div style="position:absolute;left:932px;top:674.50px;line-height:16px;font-size:13px;color:#333;font-weight:400;white-space:pre;font-family:'Liberation Sans',sans-serif;letter-spacing:-0.128px;">Логические операторы и константы</div>
<svg style="position:absolute;left:889px;top:706px;" width="10" height="10" viewBox="0 0 10 10"><circle cx="5" cy="5" r="4.3" fill="#fff" stroke="#a8a8a8" stroke-width="1"/><path d="M2.2 5H7.8" stroke="#707070" stroke-width="0.9"/><path d="M5 2.2V7.8" stroke="#707070" stroke-width="0.9"/></svg>
<div style="position:absolute;left:314px;width:1200px;text-align:center;top:702.50px;line-height:18px;font-size:14px;color:#666;font-weight:400;white-space:pre;font-family:'Liberation Serif',serif;font-style:italic;">fx</div>
<div style="position:absolute;left:932px;top:703.50px;line-height:16px;font-size:13px;color:#333;font-weight:400;white-space:pre;font-family:'Liberation Sans',sans-serif;letter-spacing:-0.211px;">Числовые функции</div>
<svg style="position:absolute;left:889px;top:736px;" width="10" height="10" viewBox="0 0 10 10"><circle cx="5" cy="5" r="4.3" fill="#fff" stroke="#a8a8a8" stroke-width="1"/><path d="M2.2 5H7.8" stroke="#707070" stroke-width="0.9"/><path d="M5 2.2V7.8" stroke="#707070" stroke-width="0.9"/></svg>
<div style="position:absolute;left:314px;width:1200px;text-align:center;top:731.50px;line-height:18px;font-size:14px;color:#666;font-weight:400;white-space:pre;font-family:'Liberation Serif',serif;font-style:italic;">fx</div>
<div style="position:absolute;left:932px;top:732.50px;line-height:16px;font-size:13px;color:#333;font-weight:400;white-space:pre;font-family:'Liberation Sans',sans-serif;letter-spacing:-0.256px;">Строковые функции</div>
<svg style="position:absolute;left:889px;top:764px;" width="10" height="10" viewBox="0 0 10 10"><circle cx="5" cy="5" r="4.3" fill="#fff" stroke="#a8a8a8" stroke-width="1"/><path d="M2.2 5H7.8" stroke="#707070" stroke-width="0.9"/><path d="M5 2.2V7.8" stroke="#707070" stroke-width="0.9"/></svg>
<div style="position:absolute;left:314px;width:1200px;text-align:center;top:760.50px;line-height:18px;font-size:14px;color:#666;font-weight:400;white-space:pre;font-family:'Liberation Serif',serif;font-style:italic;">fx</div>
<div style="position:absolute;left:932px;top:761.50px;line-height:16px;font-size:13px;color:#333;font-weight:400;white-space:pre;font-family:'Liberation Sans',sans-serif;letter-spacing:-0.094px;">Функции для табличных частей</div>
<svg style="position:absolute;left:889px;top:794px;" width="10" height="10" viewBox="0 0 10 10"><circle cx="5" cy="5" r="4.3" fill="#fff" stroke="#a8a8a8" stroke-width="1"/><path d="M2.2 5H7.8" stroke="#707070" stroke-width="0.9"/><path d="M5 2.2V7.8" stroke="#707070" stroke-width="0.9"/></svg>
<div style="position:absolute;left:314px;width:1200px;text-align:center;top:789.50px;line-height:18px;font-size:14px;color:#666;font-weight:400;white-space:pre;font-family:'Liberation Serif',serif;font-style:italic;">fx</div>
<div style="position:absolute;left:932px;top:790.50px;line-height:16px;font-size:13px;color:#333;font-weight:400;white-space:pre;font-family:'Liberation Sans',sans-serif;letter-spacing:-0.199px;">Прочие функции</div>
<div style="position:absolute;left:1483px;top:0px;width:1px;height:1086px;background:#c9bb7f;"></div>
<div style="position:absolute;left:1484px;top:857px;width:193px;height:2px;background:#fff;"></div>
<div style="position:absolute;left:1484px;top:859px;width:193px;height:5px;background:#f3efdc;"></div>
<div style="position:absolute;left:1484px;top:864px;width:193px;height:17px;background:#cacaca;"></div>
<div style="position:absolute;left:1484px;top:881px;width:193px;height:22px;background:linear-gradient(#faf6e6,#f0e9cd);border-top:1px solid #c8bd8a;box-sizing:border-box;"></div>
<div style="position:absolute;left:1484px;top:903px;width:193px;height:18px;background:#5267c0;border-top:1px dotted #c9c08a;border-bottom:1px dotted #c9c08a;box-sizing:border-box;"></div>
<div style="position:absolute;left:1484px;top:921px;width:193px;height:165px;background:#fff;"></div>
<div style="position:absolute;left:1484px;top:921px;width:6px;height:165px;background:linear-gradient(90deg,#e9e9e9,#fff);"></div>
<div style="position:absolute;left:1484px;top:940px;width:193px;height:1px;background:#d0d4dc;"></div>
<div style="position:absolute;left:1367px;top:169px;width:303px;height:603px;background:rgba(0,0,0,0.28);filter:blur(1.5px);"></div>
<div style="position:absolute;left:1364px;top:166px;width:303px;height:603px;background:#fff;border:1px solid #a0a0a0;box-sizing:border-box;"></div>
<div style="position:absolute;left:1365px;top:641px;width:301px;height:29px;background:#f9cb23;"></div>
<div style="position:absolute;left:1409px;top:173.50px;line-height:16px;font-size:13px;color:#aaa;font-weight:400;white-space:pre;font-family:'Liberation Sans',sans-serif;letter-spacing:-0.156px;">Удалить штамп ЭП</div>
<svg style="position:absolute;left:1381px;top:174px;" width="17" height="17" viewBox="0 0 17 17"><rect x="0.5" y="8.5" width="15" height="7" fill="#d8d8d8" stroke="#b8b8b8"/><path d="M0.5 12H15.5M5.5 8.5V15.5M10.5 8.5V15.5" stroke="#b8b8b8"/><rect x="8.5" y="0.5" width="7" height="8" fill="#eee" stroke="#b8b8b8"/><path d="M1 1L6 6M6 1L1 6" stroke="#b09090" stroke-width="2"/></svg>
<div style="position:absolute;left:1409px;top:203.50px;line-height:16px;font-size:13px;color:#333;font-weight:400;white-space:pre;font-family:'Liberation Sans',sans-serif;letter-spacing:-0.092px;">Удалить все изменения макета</div>
<svg style="position:absolute;left:1381px;top:204px;" width="16" height="16" viewBox="0 0 16 16"><circle cx="8" cy="8" r="7" fill="#d9262b"/><path d="M5 5L11 11M11 5L5 11" stroke="#fff" stroke-width="1.8"/></svg>
<div style="position:absolute;left:1366px;top:228px;width:299px;height:1px;background:#dcd6c3;"></div>
<div style="position:absolute;left:1409px;top:237.50px;line-height:16px;font-size:13px;color:#aaa;font-weight:400;white-space:pre;font-family:'Liberation Sans',sans-serif;letter-spacing:-0.214px;">Вставить</div>
<div style="position:absolute;left:438px;width:1200px;text-align:right;top:237.50px;line-height:16px;font-size:13px;color:#aaa;font-weight:400;white-space:pre;font-family:'Liberation Sans',sans-serif;letter-spacing:-0.014px;">Ctrl+V</div>
<svg style="position:absolute;left:1381px;top:238px;" width="16" height="16" viewBox="0 0 16 16"><rect x="1" y="2" width="10" height="12" rx="1" fill="#ddd" stroke="#c3c3c3"/><rect x="4" y="0.5" width="4" height="3" fill="#ccc"/><rect x="6" y="6" width="9" height="9" fill="#e8e8e8" stroke="#c8c8c8"/></svg>
<div style="position:absolute;left:1409px;top:267.50px;line-height:16px;font-size:13px;color:#333;font-weight:400;white-space:pre;font-family:'Liberation Sans',sans-serif;letter-spacing:-0.130px;">Копировать</div>
<div style="position:absolute;left:438px;width:1200px;text-align:right;top:267.50px;line-height:16px;font-size:13px;color:#aaa;font-weight:400;white-space:pre;font-family:'Liberation Sans',sans-serif;letter-spacing:-0.134px;">Ctrl+C</div>
<svg style="position:absolute;left:1381px;top:268px;" width="17" height="17" viewBox="0 0 17 17"><path d="M1.5 1.5H7.5L10.5 4.5V12.5H1.5Z" fill="#fff" stroke="#4a5560" stroke-width="1"/><path d="M3 5H8M3 7H9M3 9H9" stroke="#7a8590" stroke-width="0.8"/><path d="M6.5 6.5H12.5L15.5 9.5V16.5H6.5Z" fill="#fff" stroke="#4a5560" stroke-width="1"/><path d="M8 10H13M8 12H14M8 14H14" stroke="#7a8590" stroke-width="0.8"/></svg>
<div style="position:absolute;left:1366px;top:292px;width:299px;height:1px;background:#dcd6c3;"></div>
<div style="position:absolute;left:1409px;top:301.50px;line-height:16px;font-size:13px;color:#333;font-weight:400;white-space:pre;font-family:'Liberation Sans',sans-serif;letter-spacing:-0.427px;">Текст</div>
<svg style="position:absolute;left:1647px;top:304px;" width="6" height="10" viewBox="0 0 6 10"><path d="M0 0L6 5L0 10Z" fill="#333"/></svg>
<div style="position:absolute;left:1409px;top:331.00px;line-height:16px;font-size:13px;color:#333;font-weight:400;white-space:pre;font-family:'Liberation Sans',sans-serif;letter-spacing:-0.414px;">Границы</div>
<svg style="position:absolute;left:1647px;top:334px;" width="6" height="10" viewBox="0 0 6 10"><path d="M0 0L6 5L0 10Z" fill="#333"/></svg>
<svg style="position:absolute;left:1382px;top:332px;" width="14" height="14" viewBox="0 0 14 14"><rect x="0.5" y="0.5" width="13" height="13" fill="#fff" stroke="#333"/><path d="M7 3V11M3 7H11" stroke="#888" stroke-width="1" stroke-dasharray="1,1"/></svg>
<div style="position:absolute;left:1409px;top:361.50px;line-height:16px;font-size:13px;color:#333;font-weight:400;white-space:pre;font-family:'Liberation Sans',sans-serif;letter-spacing:-0.057px;">Действия с ячейками</div>
<svg style="position:absolute;left:1647px;top:364px;" width="6" height="10" viewBox="0 0 6 10"><path d="M0 0L6 5L0 10Z" fill="#333"/></svg>
<svg style="position:absolute;left:1381px;top:362px;" width="16" height="16" viewBox="0 0 16 16"><rect x="0.5" y="0.5" width="15" height="15" fill="#eee" stroke="#999"/><path d="M0.5 5H15.5M0.5 10H15.5M6 0.5V15.5M11 0.5V15.5" stroke="#aaa" stroke-width="0.8"/><rect x="6" y="1" width="9" height="7" fill="#fff" stroke="#666"/><path d="M1 12H5" stroke="#2a2" stroke-width="1.5"/></svg>
<div style="position:absolute;left:1409px;top:391.00px;line-height:16px;font-size:13px;color:#333;font-weight:400;white-space:pre;font-family:'Liberation Sans',sans-serif;letter-spacing:0.005px;">Рисунки</div>
<svg style="position:absolute;left:1647px;top:394px;" width="6" height="10" viewBox="0 0 6 10"><path d="M0 0L6 5L0 10Z" fill="#333"/></svg>
<svg style="position:absolute;left:1382px;top:392px;" width="14" height="14" viewBox="0 0 14 14"><rect x="0.5" y="0.5" width="13" height="13" fill="#5d8fcf" stroke="#3b6aa8"/><path d="M1 13 L1 9 L5 7 L9 10 L13 6 V13Z" fill="#6ab04c"/><circle cx="5" cy="4" r="1.3" fill="#ffe14a"/></svg>
<div style="position:absolute;left:1366px;top:416px;width:299px;height:1px;background:#dcd6c3;"></div>
<div style="position:absolute;left:1409px;top:425.30px;line-height:16px;font-size:13px;color:#333;font-weight:400;white-space:pre;font-family:'Liberation Sans',sans-serif;letter-spacing:0.010px;">Действия с группами</div>
<svg style="position:absolute;left:1647px;top:428px;" width="6" height="10" viewBox="0 0 6 10"><path d="M0 0L6 5L0 10Z" fill="#333"/></svg>
<div style="position:absolute;left:1409px;top:455.40px;line-height:16px;font-size:13px;color:#333;font-weight:400;white-space:pre;font-family:'Liberation Sans',sans-serif;letter-spacing:-0.078px;">Изменить форму...</div>
<svg style="position:absolute;left:1382px;top:456px;" width="14" height="14" viewBox="0 0 14 14"><rect x="0.5" y="0.5" width="13" height="13" fill="#ddd" stroke="#999"/><rect x="0.5" y="0.5" width="13" height="2" fill="#5b9bd5"/><circle cx="7" cy="8" r="3.5" fill="#ccc" stroke="#999"/><circle cx="7" cy="8" r="1.3" fill="#999"/></svg>
<div style="position:absolute;left:1366px;top:480px;width:299px;height:1px;background:#dcd6c3;"></div>
<div style="position:absolute;left:1409px;top:488.80px;line-height:16px;font-size:13px;color:#333;font-weight:400;white-space:pre;font-family:'Liberation Sans',sans-serif;letter-spacing:-0.025px;">Печать...</div>
<div style="position:absolute;left:438px;width:1200px;text-align:right;top:488.80px;line-height:16px;font-size:13px;color:#aaa;font-weight:400;white-space:pre;font-family:'Liberation Sans',sans-serif;letter-spacing:-0.081px;">Ctrl+P</div>
<svg style="position:absolute;left:1381px;top:489px;" width="16" height="16" viewBox="0 0 16 16"><rect x="4" y="1" width="8" height="4" fill="#fff" stroke="#2a5a90" stroke-width="1.2"/><rect x="1" y="5" width="14" height="7" rx="1.5" fill="#2a5a90"/><rect x="4" y="9" width="8" height="6" fill="#fff" stroke="#2a5a90" stroke-width="1.2"/></svg>
<div style="position:absolute;left:1409px;top:519.50px;line-height:16px;font-size:13px;color:#333;font-weight:400;white-space:pre;font-family:'Liberation Sans',sans-serif;letter-spacing:-0.106px;">Предварительный просмотр...</div>
<svg style="position:absolute;left:1381px;top:520px;" width="16" height="17" viewBox="0 0 16 17"><path d="M2 1 H9 L12 4 V14 H2Z" fill="#fff" stroke="#4a6c94" stroke-width="1.1"/><circle cx="9" cy="10" r="2.8" fill="none" stroke="#1f4f86" stroke-width="1.7"/><path d="M11 12 L14.5 15.5" stroke="#1f4f86" stroke-width="2"/></svg>
<div style="position:absolute;left:1409px;top:549.60px;line-height:16px;font-size:13px;color:#333;font-weight:400;white-space:pre;font-family:'Liberation Sans',sans-serif;letter-spacing:-0.171px;">Параметры страницы...</div>
<svg style="position:absolute;left:1381px;top:550px;" width="16" height="16" viewBox="0 0 16 16"><rect x="2.5" y="2.5" width="11" height="11" fill="none" stroke="#8fb0d8" stroke-width="1" stroke-dasharray="1,1"/><path d="M8 0V16M0 8H16" stroke="#2a5a90" stroke-width="1.1"/><path d="M6 2L8 0L10 2M6 14L8 16L10 14M2 6L0 8L2 10M14 6L16 8L14 10" fill="none" stroke="#2a5a90" stroke-width="1"/></svg>
<div style="position:absolute;left:1366px;top:574px;width:299px;height:1px;background:#dcd6c3;"></div>
<div style="position:absolute;left:1409px;top:583.50px;line-height:16px;font-size:13px;color:#333;font-weight:400;white-space:pre;font-family:'Liberation Sans',sans-serif;letter-spacing:0.164px;">Русский</div>
<svg style="position:absolute;left:1647px;top:586px;" width="6" height="10" viewBox="0 0 6 10"><path d="M0 0L6 5L0 10Z" fill="#333"/></svg>
<div style="position:absolute;left:1409px;top:613.80px;line-height:16px;font-size:13px;color:#333;font-weight:400;white-space:pre;font-family:'Liberation Sans',sans-serif;letter-spacing:-0.123px;">Показывать поставляемый макет</div>
<svg style="position:absolute;left:1382px;top:614px;" width="13" height="16" viewBox="0 0 13 16"><rect x="0.5" y="0.5" width="12" height="14" fill="#f4f7fb" stroke="#8aa6c8"/><path d="M2.5 4H10.5M2.5 6.5H10.5M2.5 9H10.5M2.5 11.5H10.5" stroke="#a9bfdc" stroke-width="1"/></svg>
<div style="position:absolute;left:1366px;top:638px;width:299px;height:1px;background:#dcd6c3;"></div>
<div style="position:absolute;left:1409px;top:647.90px;line-height:16px;font-size:13px;color:#333;font-weight:400;white-space:pre;font-family:'Liberation Sans',sans-serif;letter-spacing:-0.107px;">Выгрузить в файл...</div>
<div style="position:absolute;left:1409px;top:677.80px;line-height:16px;font-size:13px;color:#333;font-weight:400;white-space:pre;font-family:'Liberation Sans',sans-serif;letter-spacing:-0.141px;">Загрузить из файла...</div>
<div style="position:absolute;left:1366px;top:702px;width:299px;height:1px;background:#dcd6c3;"></div>
<div style="position:absolute;left:1409px;top:711.50px;line-height:16px;font-size:13px;color:#333;font-weight:400;white-space:pre;font-family:'Liberation Sans',sans-serif;letter-spacing:-0.698px;">Таблица</div>
<svg style="position:absolute;left:1647px;top:714px;" width="6" height="10" viewBox="0 0 6 10"><path d="M0 0L6 5L0 10Z" fill="#333"/></svg>
<div style="position:absolute;left:1366px;top:736px;width:299px;height:1px;background:#dcd6c3;"></div>
<div style="position:absolute;left:1409px;top:745.20px;line-height:16px;font-size:13px;color:#333;font-weight:400;white-space:pre;font-family:'Liberation Sans',sans-serif;letter-spacing:-0.286px;">Справка</div>
<div style="position:absolute;left:438px;width:1200px;text-align:right;top:745.20px;line-height:16px;font-size:13px;color:#aaa;font-weight:400;white-space:pre;font-family:'Liberation Sans',sans-serif;letter-spacing:-0.586px;">F1</div>
<div style="position:absolute;left:789px;width:1200px;text-align:center;top:743.70px;line-height:19px;font-size:15px;color:#111;font-weight:400;white-space:pre;font-family:'Liberation Sans',sans-serif;">?</div>
<svg style="position:absolute;left:0;top:0;" width="1677" height="1086"><g fill="#e8393a"><polygon points="1212.7,166.1 1353.0,148.3 1349.8,143.8 1372.5,149.3 1352.0,160.5 1353.8,154.3 1213.3,170.9"/><circle cx="1213" cy="168.5" r="2.4"/><polygon points="1317.0,802.9 1384.4,681.9 1378.2,682.6 1396.3,665.3 1392.4,690.2 1389.3,684.6 1321.0,805.1"/><circle cx="1319" cy="804" r="2.3"/></g></svg>
<svg style="position:absolute;left:1503px;top:648px;" width="14" height="22" viewBox="0 0 14 22"><path d="M1 1 L1 17 L5 13 L8 20 L11 19 L8 12 L13 12Z" fill="#fff" stroke="#000" stroke-width="1.1" stroke-linejoin="round"/></svg>
<div style="position:absolute;left:0px;top:1060px;width:1482px;height:26px;background:#adadad;"></div>
<div style="position:absolute;left:5px;top:1067px;width:22px;height:19px;background:#fdfdfd;border-radius:3px 3px 0 0;"></div>
<svg style="position:absolute;left:8px;top:1070px;" width="17" height="16" viewBox="0 0 17 16"><rect x="5" y="1" width="10" height="8" fill="none" stroke="#333" stroke-width="1.1"/><rect x="1" y="5" width="10" height="8" fill="#fff" stroke="#333" stroke-width="1.1"/><path d="M6 13V15M3 15.5H9" stroke="#333" stroke-width="1.1"/></svg>
<div style="position:absolute;left:33px;top:1069.50px;line-height:16px;font-size:13px;color:#222;font-weight:400;white-space:pre;font-family:'Liberation Sans',sans-serif;letter-spacing:0.025px;">Текущие вызовы: 0</div>
<div style="position:absolute;left:161px;top:1069.50px;line-height:16px;font-size:13px;color:#222;font-weight:400;white-space:pre;font-family:'Liberation Sans',sans-serif;letter-spacing:-0.105px;">Накопленные вызовы: 40</div>
</body></html>
